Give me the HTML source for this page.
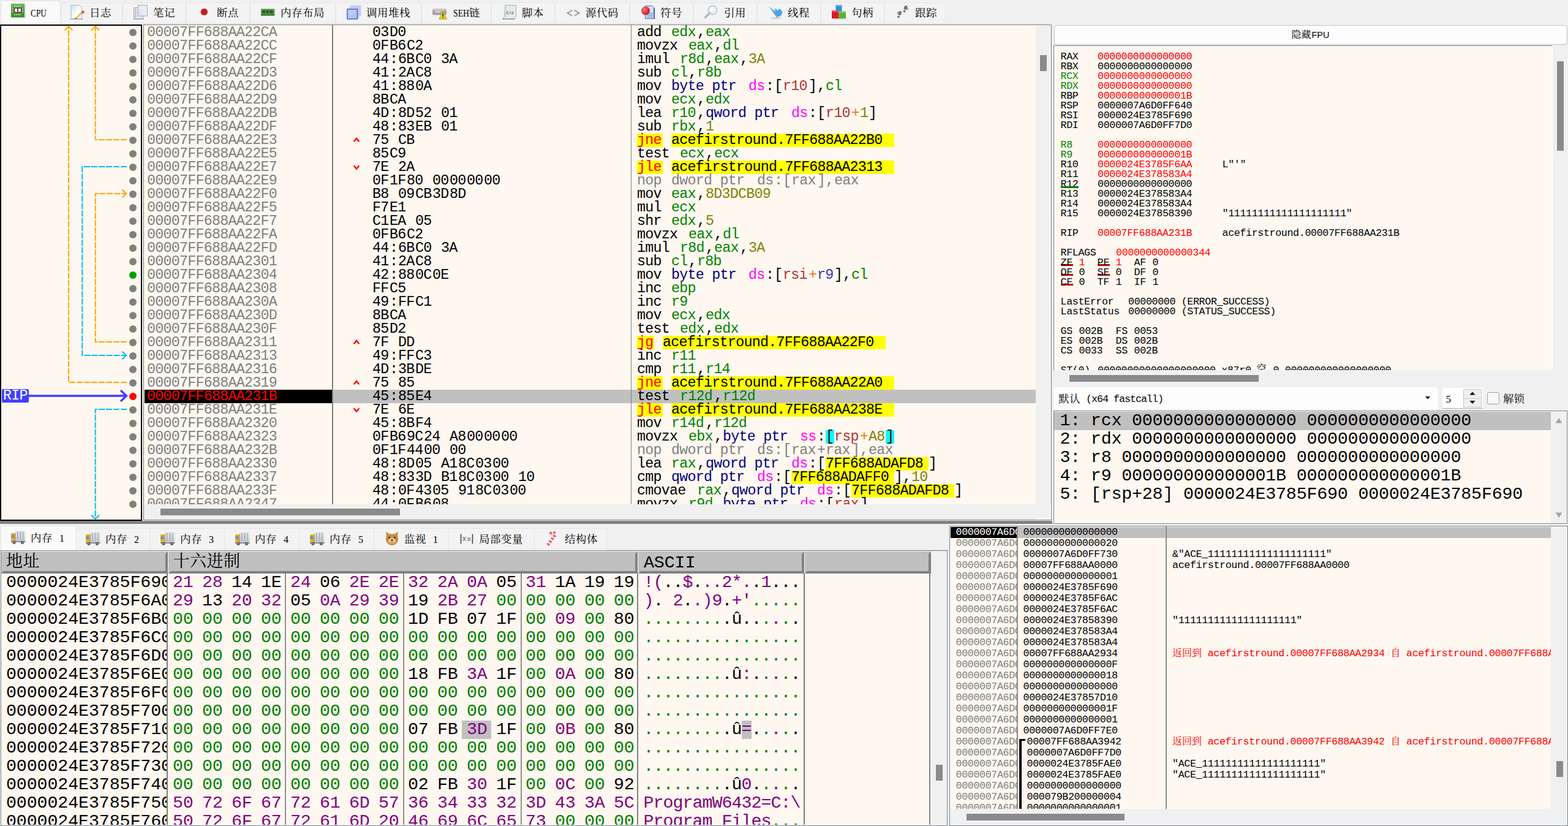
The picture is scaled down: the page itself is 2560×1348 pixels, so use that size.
<!DOCTYPE html>
<html><head><meta charset="utf-8"><title>x64dbg</title><style>
*{box-sizing:border-box}
html,body{margin:0;padding:0}
body{width:2560px;height:1348px;background:#f0f0f0;position:relative;overflow:hidden;font-family:"Liberation Sans",sans-serif}
div{position:absolute}
.pane{background:#fff8f0}
.m22{font:23.33px/22px "Liberation Mono", monospace;white-space:pre;letter-spacing:-0.75px;height:22px}
.m16{font:16.67px/16px "Liberation Mono", monospace;white-space:pre;letter-spacing:-0.36px}
.m27{font:26.67px/30px "Liberation Mono", monospace;white-space:pre;letter-spacing:0.07px;height:30px}
.m28{font:28.33px/30px "Liberation Mono", monospace;white-space:pre;letter-spacing:-0.13px;height:30px}
.t{display:inline-block;height:22px;vertical-align:top;overflow:visible}
.tab{background:#f3f3f3;border:1px solid #e6e6e6;border-bottom:none}
.hb{display:inline-block;width:48px;height:30px;vertical-align:top}
.ab{display:inline-block;width:16px;height:30px;vertical-align:top}
.ui{font:17.5px/18px "Liberation Serif",serif;white-space:pre}
.cj{font:17.5px/18px "Liberation Serif","Noto Serif CJK SC",serif;white-space:pre;letter-spacing:0.5px;color:#000}
.cj16{font:16px/18px "Liberation Serif","Noto Serif CJK SC",serif;white-space:pre;letter-spacing:0;color:#000}
.cj27{font:27px/30px "Liberation Serif","Noto Serif CJK SC",serif;white-space:pre;letter-spacing:0.5px;color:#000}
</style></head><body>
<div style="left:0;top:38px;width:1718px;height:1px;background:#dcdcdc"></div>
<div style="left:1px;top:1px;width:98px;height:39px;background:#fafafa;border:1px solid #e2e2e2;border-bottom:none"></div>
<svg style="position:absolute;left:18px;top:6px" width="24" height="24" viewBox="0 0 24 24"><defs><linearGradient id="gcpu" x1="0" y1="0" x2="0" y2="1"><stop offset="0" stop-color="#5cb85a"/><stop offset="1" stop-color="#2f8a33"/></linearGradient></defs><rect x="0.5" y="22" width="22" height="2" fill="#b8ccb8" opacity=".7"/><rect x="22" y="1" width="2" height="21.5" fill="#c8d8c8" opacity=".7"/><rect x="0" y="0" width="22" height="22" fill="url(#gcpu)"/><rect x="1.5" y="1.5" width="19" height="1.5" fill="#7cc878" opacity=".7"/><rect x="5" y="3.5" width="2" height="2.5" fill="#c9c860"/><rect x="5" y="16.5" width="2" height="2.5" fill="#c9c860"/><rect x="8" y="3.5" width="2" height="2.5" fill="#c9c860"/><rect x="8" y="16.5" width="2" height="2.5" fill="#c9c860"/><rect x="11" y="3.5" width="2" height="2.5" fill="#c9c860"/><rect x="11" y="16.5" width="2" height="2.5" fill="#c9c860"/><rect x="14" y="3.5" width="2" height="2.5" fill="#c9c860"/><rect x="14" y="16.5" width="2" height="2.5" fill="#c9c860"/><rect x="2" y="6.5" width="2.5" height="2" fill="#c9c860"/><rect x="17.5" y="6.5" width="2.5" height="2" fill="#c9c860"/><rect x="2" y="9.5" width="2.5" height="2" fill="#c9c860"/><rect x="17.5" y="9.5" width="2.5" height="2" fill="#c9c860"/><rect x="2" y="12.5" width="2.5" height="2" fill="#c9c860"/><rect x="17.5" y="12.5" width="2.5" height="2" fill="#c9c860"/><rect x="4" y="6" width="14" height="9.5" fill="#505050"/><rect x="6" y="8" width="4" height="5.5" fill="#f4f4f4"/><rect x="12" y="8" width="4" height="5.5" fill="#f4f4f4"/><rect x="6" y="13" width="10" height="1" fill="#888"/></svg>
<div class="ui" style="left:50.3px;top:11.8px;font-size:17.5px;transform:scaleX(0.764);transform-origin:0 0">CPU</div>
<div class="tab" style="left:99.5px;top:4px;width:100.5px;height:34px"></div>
<svg style="position:absolute;left:114px;top:8px" width="24" height="24" viewBox="0 0 24 24"><defs><linearGradient id="glog" x1="0" y1="0" x2="1" y2="1"><stop offset="0" stop-color="#d4e4e4"/><stop offset=".6" stop-color="#fdfefe"/></linearGradient></defs><path d="M2 0.5H15.5l4 4V23H2Z" fill="url(#glog)" stroke="#a4b8b8"/><rect x="0.5" y="22" width="21" height="1.6" fill="#9aa8a6" opacity=".8"/><path d="M8.5 22.5L18.5 11l2.5 2L11 23.5Z" fill="#d8c450"/><path d="M8 23l1-2 2 1.8Z" fill="#333"/><rect x="19.5" y="9.5" width="4" height="4.500" fill="#e85060"/></svg>
<div class="cj" style="left:145.9px;top:11.5px">日志</div>
<div class="tab" style="left:199.5px;top:4px;width:104.5px;height:34px"></div>
<svg style="position:absolute;left:218.0px;top:8px" width="24" height="24" viewBox="0 0 24 24"><rect x="0.5" y="4.5" width="15" height="18.5" fill="#dfe4f4" stroke="#9fb0b0"/><rect x="7.5" y="0.5" width="15" height="17.5" fill="#e8eef4" stroke="#9fb0b0"/><rect x="2.5" y="6" width="1.6" height="16" fill="#f0a8a8"/><rect x="0" y="22.5" width="16.5" height="1.5" fill="#a0aaa8"/><path d="M5 9h9M5 12h9M5 15h9M5 18h9" stroke="#c4cce8" stroke-width=".8"/></svg>
<div class="cj" style="left:249.9px;top:11.5px">笔记</div>
<div class="tab" style="left:303.5px;top:4px;width:104.5px;height:34px"></div>
<svg style="position:absolute;left:322.0px;top:8px" width="24" height="24" viewBox="0 0 24 24"><circle cx="11.4" cy="11.4" r="5.4" fill="#c61c1c"/><circle cx="11.4" cy="11.4" r="6.2" fill="#c61c1c" opacity=".25"/></svg>
<div class="cj" style="left:353.9px;top:11.5px">断点</div>
<div class="tab" style="left:407.5px;top:4px;width:140.5px;height:34px"></div>
<svg style="position:absolute;left:426.0px;top:8px" width="24" height="24" viewBox="0 0 24 24"><rect x="0" y="6.5" width="22" height="11" fill="#4a9a42"/><rect x="0" y="15.5" width="22" height="2" fill="#357a30"/><rect x="2.5" y="9" width="4.5" height="4.5" fill="#3a4a38"/><rect x="8.7" y="9" width="4.5" height="4.5" fill="#3a4a38"/><rect x="15" y="9" width="4.5" height="4.5" fill="#3a4a38"/><rect x="22" y="7" width="1.5" height="10" fill="#c0d4c0"/></svg>
<div class="cj" style="left:457.9px;top:11.5px">内存布局</div>
<div class="tab" style="left:547.5px;top:4px;width:140.5px;height:34px"></div>
<svg style="position:absolute;left:566.0px;top:8px" width="24" height="24" viewBox="0 0 24 24"><defs><linearGradient id="gcs" x1="0" y1="0" x2="1" y2="1"><stop offset="0" stop-color="#c4d4f0"/><stop offset="1" stop-color="#a8c0e8"/></linearGradient></defs><rect x="6" y="0.5" width="17.5" height="17.5" fill="#b4c8e8" opacity=".75"/><rect x="3.5" y="3.5" width="17.5" height="17.5" fill="#b8cce8" opacity=".8"/><rect x="1" y="7" width="16.5" height="16" fill="url(#gcs)" stroke="#6070e0" stroke-width="1.8"/></svg>
<div class="cj" style="left:597.9px;top:11.5px">调用堆栈</div>
<div class="tab" style="left:687.5px;top:4px;width:114.5px;height:34px"></div>
<svg style="position:absolute;left:706.0px;top:8px" width="24" height="24" viewBox="0 0 24 24"><rect x="0" y="6.5" width="23" height="10" rx="2.5" fill="#a0a0a0"/><rect x="1" y="7" width="21" height="3" rx="1.5" fill="#c4c4c4"/><rect x="4" y="10.5" width="10" height="2" rx="1" fill="#e4e4e4"/><path d="M17.2 10L23.6 23.4H10.8Z" fill="#e8d020" stroke="#b8a010" stroke-width=".8"/><rect x="16.5" y="14" width="1.6" height="5" fill="#333"/><rect x="16.5" y="20" width="1.6" height="1.6" fill="#333"/></svg>
<div class="ui" style="left:739.8px;top:12.3px;font-size:17.5px;transform:scaleX(0.786);transform-origin:0 0">SEH</div><div class="cj" style="left:765.8px;top:11.5px">链</div>
<div class="tab" style="left:801.5px;top:4px;width:104.5px;height:34px"></div>
<svg style="position:absolute;left:820.0px;top:8px" width="24" height="24" viewBox="0 0 24 24"><path d="M4.5 0.5H22.5V19.5l-2.5 3.5H0.5l3-3.5Z" fill="#e6ebe8" stroke="#a4b4b0"/><rect x="4.5" y="1" width="2" height="19" fill="#cfd8d4"/><path d="M0.5 23h19.5" stroke="#8c9a98" stroke-width="1.4"/><path d="M9.5 10.5L7 13l2.5 2.5M15.5 10.5L18 13l-2.5 2.5" fill="none" stroke="#8a9290" stroke-width="1.6"/><rect x="10.5" y="11" width="4" height="4" fill="#b8c0bc"/></svg>
<div class="cj" style="left:851.9px;top:11.5px">脚本</div>
<div class="tab" style="left:905.5px;top:4px;width:122.5px;height:34px"></div>
<svg style="position:absolute;left:924.0px;top:8px" width="24" height="24" viewBox="0 0 24 24"><path d="M10 8.8L2.8 13.3L10 17.8M14 8.8L21.2 13.3L14 17.8" fill="none" stroke="#8c8c8c" stroke-width="2.2" stroke-dasharray="2.4 0.7"/></svg>
<div class="cj" style="left:955.9px;top:11.5px">源代码</div>
<div class="tab" style="left:1027.5px;top:4px;width:104.5px;height:34px"></div>
<svg style="position:absolute;left:1046.0px;top:8px" width="24" height="24" viewBox="0 0 24 24"><path d="M7.5 1.5H19l3.5 3.5V22.5H7.5Z" fill="#d4e0f8" stroke="#5870c0"/><path d="M10 14h10M10 17h10M10 20h10" stroke="#8098e0" stroke-width="1.6"/><rect x="21" y="5" width="2" height="18" fill="#4860b0"/><defs><radialGradient id="gsym" cx=".35" cy=".35" r=".7"><stop offset="0" stop-color="#f08080"/><stop offset="1" stop-color="#c01818"/></radialGradient></defs><circle cx="8" cy="9.5" r="7" fill="url(#gsym)"/></svg>
<div class="cj" style="left:1077.9px;top:11.5px">符号</div>
<div class="tab" style="left:1131.5px;top:4px;width:104.5px;height:34px"></div>
<svg style="position:absolute;left:1150.0px;top:8px" width="24" height="24" viewBox="0 0 24 24"><circle cx="13.5" cy="8.5" r="7" fill="#eef2f8" stroke="#c4ccd4" stroke-width="2"/><circle cx="11.5" cy="6.5" r="2.5" fill="#fff"/><path d="M8.5 13.5L1.5 20.5" stroke="#b4b8bc" stroke-width="3.6" stroke-linecap="round"/></svg>
<div class="cj" style="left:1181.9px;top:11.5px">引用</div>
<div class="tab" style="left:1235.5px;top:4px;width:104.5px;height:34px"></div>
<svg style="position:absolute;left:1254.0px;top:8px" width="24" height="24" viewBox="0 0 24 24"><ellipse cx="13" cy="21.5" rx="9" ry="1.6" fill="#c8c8c8" opacity=".7"/><path d="M0.5 2.5C4 6 6 9 8 12c2 3 3 5 6 6.5l-1.5 2.5 5-2c4-1 5.5-4 5.8-8l-3-3.5c-2-2-4 0-4.5 2l-4-4-1 4C8 7 4 5 0.5 2.5Z" fill="#4ea4e8"/><path d="M3 4.5c4 3 7 6 10 6" stroke="#8cc8f4" stroke-width="1.4" fill="none"/></svg>
<div class="cj" style="left:1285.9px;top:11.5px">线程</div>
<div class="tab" style="left:1339.5px;top:4px;width:104.5px;height:34px"></div>
<svg style="position:absolute;left:1358.0px;top:8px" width="24" height="24" viewBox="0 0 24 24"><rect x="6.5" y="0" width="10" height="11" fill="#2a92d8"/><rect x="6.5" y="0" width="10" height="2.5" fill="#58b4f0"/><rect x="0" y="9" width="11.5" height="13" fill="#d81c24"/><rect x="0" y="9" width="11.5" height="2.5" fill="#f05058"/><rect x="11.5" y="10.5" width="11.5" height="11.5" fill="#58b038"/><rect x="11.5" y="10.5" width="11.5" height="2.5" fill="#88d068"/><rect x="1" y="22" width="22" height="1.6" fill="#b8b8b8" opacity=".7"/></svg>
<div class="cj" style="left:1389.9px;top:11.5px">句柄</div>
<div class="tab" style="left:1443.5px;top:4px;width:100.5px;height:34px"></div>
<svg style="position:absolute;left:1462.0px;top:8px" width="24" height="24" viewBox="0 0 24 24"><g fill="#707070"><ellipse cx="16.5" cy="4.5" rx="2.6" ry="3.6" transform="rotate(20 16.5 4.5)"/><ellipse cx="14.5" cy="10.5" rx="2" ry="1.8"/><ellipse cx="7" cy="13.5" rx="2.6" ry="3.6" transform="rotate(20 7 13.5)"/><ellipse cx="5" cy="19.5" rx="2" ry="1.8"/></g><g fill="#a8a8a8"><ellipse cx="19.5" cy="6.5" rx="1.6" ry="2.4"/><ellipse cx="4" cy="13" rx="1.4" ry="2"/></g></svg>
<div class="cj" style="left:1493.9px;top:11.5px">跟踪</div>
<div style="left:234px;top:40px;width:1483px;height:809px;background:#f0f0f0;border:1px solid #7a8290"></div>
<div style="left:235px;top:41px;width:1456px;height:782px;background:#fff8f0;overflow:hidden">
<div style="left:1px;top:595px;width:306px;height:22px;background:#000"></div>
<div style="left:307px;top:595px;width:1160px;height:22px;background:#c0c0c0"></div>
<div style="left:307px;top:0;width:1.5px;height:790px;background:#808080"></div>
<div style="left:794.5px;top:0;width:1.5px;height:790px;background:#808080"></div>
<div class="m22" style="left:5px;top:1px;color:#808080">00007FF688AA22CA</div>
<div class="m22" style="left:373px;top:1px"><span class="t" style="width:28px">03</span><span class="t" style="width:28px">D0</span></div>
<div class="m22" style="left:805px;top:1px"><span class="t" style="width:42px;">add</span><span class="t" style="width:14px;"> </span><span class="t" style="width:42px;color:#008300;">edx</span><span class="t" style="width:14px;">,</span><span class="t" style="width:42px;color:#008300;">eax</span></div>
<div class="m22" style="left:5px;top:23px;color:#808080">00007FF688AA22CC</div>
<div class="m22" style="left:373px;top:23px"><span class="t" style="width:28px">0F</span><span class="t" style="width:28px">B6</span><span class="t" style="width:28px">C2</span></div>
<div class="m22" style="left:805px;top:23px"><span class="t" style="width:70px;">movzx</span><span class="t" style="width:14px;"> </span><span class="t" style="width:42px;color:#008300;">eax</span><span class="t" style="width:14px;">,</span><span class="t" style="width:28px;color:#008300;">dl</span></div>
<div class="m22" style="left:5px;top:45px;color:#808080">00007FF688AA22CF</div>
<div class="m22" style="left:373px;top:45px"><span class="t" style="width:28px">44</span><span class="t" style="width:14px">:</span><span class="t" style="width:28px">6B</span><span class="t" style="width:28px">C0</span><span class="t" style="width:14px"> </span><span class="t" style="width:28px">3A</span></div>
<div class="m22" style="left:805px;top:45px"><span class="t" style="width:56px;">imul</span><span class="t" style="width:14px;"> </span><span class="t" style="width:42px;color:#008300;">r8d</span><span class="t" style="width:14px;">,</span><span class="t" style="width:42px;color:#008300;">eax</span><span class="t" style="width:14px;">,</span><span class="t" style="width:28px;color:#828200;">3A</span></div>
<div class="m22" style="left:5px;top:67px;color:#808080">00007FF688AA22D3</div>
<div class="m22" style="left:373px;top:67px"><span class="t" style="width:28px">41</span><span class="t" style="width:14px">:</span><span class="t" style="width:28px">2A</span><span class="t" style="width:28px">C8</span></div>
<div class="m22" style="left:805px;top:67px"><span class="t" style="width:42px;">sub</span><span class="t" style="width:14px;"> </span><span class="t" style="width:28px;color:#008300;">cl</span><span class="t" style="width:14px;">,</span><span class="t" style="width:42px;color:#008300;">r8b</span></div>
<div class="m22" style="left:5px;top:89px;color:#808080">00007FF688AA22D6</div>
<div class="m22" style="left:373px;top:89px"><span class="t" style="width:28px">41</span><span class="t" style="width:14px">:</span><span class="t" style="width:28px">88</span><span class="t" style="width:28px">0A</span></div>
<div class="m22" style="left:805px;top:89px"><span class="t" style="width:42px;">mov</span><span class="t" style="width:14px;"> </span><span class="t" style="width:112px;color:#000080;">byte ptr</span><span class="t" style="width:14px;"> </span><span class="t" style="width:28px;color:#ff00ff;">ds</span><span class="t" style="width:14px;">:</span><span class="t" style="width:14px;">[</span><span class="t" style="width:42px;color:#b03434;">r10</span><span class="t" style="width:14px;">]</span><span class="t" style="width:14px;">,</span><span class="t" style="width:28px;color:#008300;">cl</span></div>
<div class="m22" style="left:5px;top:111px;color:#808080">00007FF688AA22D9</div>
<div class="m22" style="left:373px;top:111px"><span class="t" style="width:28px">8B</span><span class="t" style="width:28px">CA</span></div>
<div class="m22" style="left:805px;top:111px"><span class="t" style="width:42px;">mov</span><span class="t" style="width:14px;"> </span><span class="t" style="width:42px;color:#008300;">ecx</span><span class="t" style="width:14px;">,</span><span class="t" style="width:42px;color:#008300;">edx</span></div>
<div class="m22" style="left:5px;top:133px;color:#808080">00007FF688AA22DB</div>
<div class="m22" style="left:373px;top:133px"><span class="t" style="width:28px">4D</span><span class="t" style="width:14px">:</span><span class="t" style="width:28px">8D</span><span class="t" style="width:28px">52</span><span class="t" style="width:14px"> </span><span class="t" style="width:28px">01</span></div>
<div class="m22" style="left:805px;top:133px"><span class="t" style="width:42px;">lea</span><span class="t" style="width:14px;"> </span><span class="t" style="width:42px;color:#008300;">r10</span><span class="t" style="width:14px;">,</span><span class="t" style="width:126px;color:#000080;">qword ptr</span><span class="t" style="width:14px;"> </span><span class="t" style="width:28px;color:#ff00ff;">ds</span><span class="t" style="width:14px;">:</span><span class="t" style="width:14px;">[</span><span class="t" style="width:42px;color:#b03434;">r10</span><span class="t" style="width:14px;color:#f27711;">+</span><span class="t" style="width:14px;color:#828200;">1</span><span class="t" style="width:14px;">]</span></div>
<div class="m22" style="left:5px;top:155px;color:#808080">00007FF688AA22DF</div>
<div class="m22" style="left:373px;top:155px"><span class="t" style="width:28px">48</span><span class="t" style="width:14px">:</span><span class="t" style="width:28px">83</span><span class="t" style="width:28px">EB</span><span class="t" style="width:14px"> </span><span class="t" style="width:28px">01</span></div>
<div class="m22" style="left:805px;top:155px"><span class="t" style="width:42px;">sub</span><span class="t" style="width:14px;"> </span><span class="t" style="width:42px;color:#008300;">rbx</span><span class="t" style="width:14px;">,</span><span class="t" style="width:14px;color:#828200;">1</span></div>
<div class="m22" style="left:5px;top:177px;color:#808080">00007FF688AA22E3</div>
<svg style="position:absolute;left:341px;top:182px" width="12" height="12"><path d="M1.7 8.3L6 3L10.3 8.3" fill="none" stroke="#f00" stroke-width="2.4"/></svg>
<div class="m22" style="left:373px;top:177px"><span class="t" style="width:28px">75</span><span class="t" style="width:14px"> </span><span class="t" style="width:28px">CB</span></div>
<div class="m22" style="left:805px;top:177px"><span class="t" style="width:42px;color:#ff0000;background:#ffff00;">jne</span><span class="t" style="width:14px;"> </span><span class="t" style="width:364px;background:#ffff00;">acefirstround.7FF688AA22B0</span></div>
<div class="m22" style="left:5px;top:199px;color:#808080">00007FF688AA22E5</div>
<div class="m22" style="left:373px;top:199px"><span class="t" style="width:28px">85</span><span class="t" style="width:28px">C9</span></div>
<div class="m22" style="left:805px;top:199px"><span class="t" style="width:56px;">test</span><span class="t" style="width:14px;"> </span><span class="t" style="width:42px;color:#008300;">ecx</span><span class="t" style="width:14px;">,</span><span class="t" style="width:42px;color:#008300;">ecx</span></div>
<div class="m22" style="left:5px;top:221px;color:#808080">00007FF688AA22E7</div>
<svg style="position:absolute;left:341px;top:226px" width="12" height="12"><path d="M1.7 3.2L6 8.5L10.3 3.2" fill="none" stroke="#f00" stroke-width="2.4"/></svg>
<div class="m22" style="left:373px;top:221px"><span class="t" style="width:28px">7E</span><span class="t" style="width:14px"> </span><span class="t" style="width:28px">2A</span></div>
<div class="m22" style="left:805px;top:221px"><span class="t" style="width:42px;color:#ff0000;background:#ffff00;">jle</span><span class="t" style="width:14px;"> </span><span class="t" style="width:364px;background:#ffff00;">acefirstround.7FF688AA2313</span></div>
<div class="m22" style="left:5px;top:243px;color:#808080">00007FF688AA22E9</div>
<div class="m22" style="left:373px;top:243px"><span class="t" style="width:28px">0F</span><span class="t" style="width:28px">1F</span><span class="t" style="width:28px">80</span><span class="t" style="width:14px"> </span><span class="t" style="width:28px">00</span><span class="t" style="width:28px">00</span><span class="t" style="width:28px">00</span><span class="t" style="width:28px">00</span></div>
<div class="m22" style="left:805px;top:243px"><span class="t" style="width:42px;color:#808080;">nop</span><span class="t" style="width:14px;"> </span><span class="t" style="width:126px;color:#808080;">dword ptr</span><span class="t" style="width:14px;"> </span><span class="t" style="width:28px;color:#808080;">ds</span><span class="t" style="width:14px;color:#808080;">:</span><span class="t" style="width:14px;color:#808080;">[</span><span class="t" style="width:42px;color:#808080;">rax</span><span class="t" style="width:14px;color:#808080;">]</span><span class="t" style="width:14px;color:#808080;">,</span><span class="t" style="width:42px;color:#808080;">eax</span></div>
<div class="m22" style="left:5px;top:265px;color:#808080">00007FF688AA22F0</div>
<div class="m22" style="left:373px;top:265px"><span class="t" style="width:28px">B8</span><span class="t" style="width:14px"> </span><span class="t" style="width:28px">09</span><span class="t" style="width:28px">CB</span><span class="t" style="width:28px">3D</span><span class="t" style="width:28px">8D</span></div>
<div class="m22" style="left:805px;top:265px"><span class="t" style="width:42px;">mov</span><span class="t" style="width:14px;"> </span><span class="t" style="width:42px;color:#008300;">eax</span><span class="t" style="width:14px;">,</span><span class="t" style="width:112px;color:#828200;">8D3DCB09</span></div>
<div class="m22" style="left:5px;top:287px;color:#808080">00007FF688AA22F5</div>
<div class="m22" style="left:373px;top:287px"><span class="t" style="width:28px">F7</span><span class="t" style="width:28px">E1</span></div>
<div class="m22" style="left:805px;top:287px"><span class="t" style="width:42px;">mul</span><span class="t" style="width:14px;"> </span><span class="t" style="width:42px;color:#008300;">ecx</span></div>
<div class="m22" style="left:5px;top:309px;color:#808080">00007FF688AA22F7</div>
<div class="m22" style="left:373px;top:309px"><span class="t" style="width:28px">C1</span><span class="t" style="width:28px">EA</span><span class="t" style="width:14px"> </span><span class="t" style="width:28px">05</span></div>
<div class="m22" style="left:805px;top:309px"><span class="t" style="width:42px;">shr</span><span class="t" style="width:14px;"> </span><span class="t" style="width:42px;color:#008300;">edx</span><span class="t" style="width:14px;">,</span><span class="t" style="width:14px;color:#828200;">5</span></div>
<div class="m22" style="left:5px;top:331px;color:#808080">00007FF688AA22FA</div>
<div class="m22" style="left:373px;top:331px"><span class="t" style="width:28px">0F</span><span class="t" style="width:28px">B6</span><span class="t" style="width:28px">C2</span></div>
<div class="m22" style="left:805px;top:331px"><span class="t" style="width:70px;">movzx</span><span class="t" style="width:14px;"> </span><span class="t" style="width:42px;color:#008300;">eax</span><span class="t" style="width:14px;">,</span><span class="t" style="width:28px;color:#008300;">dl</span></div>
<div class="m22" style="left:5px;top:353px;color:#808080">00007FF688AA22FD</div>
<div class="m22" style="left:373px;top:353px"><span class="t" style="width:28px">44</span><span class="t" style="width:14px">:</span><span class="t" style="width:28px">6B</span><span class="t" style="width:28px">C0</span><span class="t" style="width:14px"> </span><span class="t" style="width:28px">3A</span></div>
<div class="m22" style="left:805px;top:353px"><span class="t" style="width:56px;">imul</span><span class="t" style="width:14px;"> </span><span class="t" style="width:42px;color:#008300;">r8d</span><span class="t" style="width:14px;">,</span><span class="t" style="width:42px;color:#008300;">eax</span><span class="t" style="width:14px;">,</span><span class="t" style="width:28px;color:#828200;">3A</span></div>
<div class="m22" style="left:5px;top:375px;color:#808080">00007FF688AA2301</div>
<div class="m22" style="left:373px;top:375px"><span class="t" style="width:28px">41</span><span class="t" style="width:14px">:</span><span class="t" style="width:28px">2A</span><span class="t" style="width:28px">C8</span></div>
<div class="m22" style="left:805px;top:375px"><span class="t" style="width:42px;">sub</span><span class="t" style="width:14px;"> </span><span class="t" style="width:28px;color:#008300;">cl</span><span class="t" style="width:14px;">,</span><span class="t" style="width:42px;color:#008300;">r8b</span></div>
<div class="m22" style="left:5px;top:397px;color:#808080">00007FF688AA2304</div>
<div class="m22" style="left:373px;top:397px"><span class="t" style="width:28px">42</span><span class="t" style="width:14px">:</span><span class="t" style="width:28px">88</span><span class="t" style="width:28px">0C</span><span class="t" style="width:28px">0E</span></div>
<div class="m22" style="left:805px;top:397px"><span class="t" style="width:42px;">mov</span><span class="t" style="width:14px;"> </span><span class="t" style="width:112px;color:#000080;">byte ptr</span><span class="t" style="width:14px;"> </span><span class="t" style="width:28px;color:#ff00ff;">ds</span><span class="t" style="width:14px;">:</span><span class="t" style="width:14px;">[</span><span class="t" style="width:42px;color:#b03434;">rsi</span><span class="t" style="width:14px;color:#f27711;">+</span><span class="t" style="width:28px;color:#3838bc;">r9</span><span class="t" style="width:14px;">]</span><span class="t" style="width:14px;">,</span><span class="t" style="width:28px;color:#008300;">cl</span></div>
<div class="m22" style="left:5px;top:419px;color:#808080">00007FF688AA2308</div>
<div class="m22" style="left:373px;top:419px"><span class="t" style="width:28px">FF</span><span class="t" style="width:28px">C5</span></div>
<div class="m22" style="left:805px;top:419px"><span class="t" style="width:42px;">inc</span><span class="t" style="width:14px;"> </span><span class="t" style="width:42px;color:#008300;">ebp</span></div>
<div class="m22" style="left:5px;top:441px;color:#808080">00007FF688AA230A</div>
<div class="m22" style="left:373px;top:441px"><span class="t" style="width:28px">49</span><span class="t" style="width:14px">:</span><span class="t" style="width:28px">FF</span><span class="t" style="width:28px">C1</span></div>
<div class="m22" style="left:805px;top:441px"><span class="t" style="width:42px;">inc</span><span class="t" style="width:14px;"> </span><span class="t" style="width:28px;color:#008300;">r9</span></div>
<div class="m22" style="left:5px;top:463px;color:#808080">00007FF688AA230D</div>
<div class="m22" style="left:373px;top:463px"><span class="t" style="width:28px">8B</span><span class="t" style="width:28px">CA</span></div>
<div class="m22" style="left:805px;top:463px"><span class="t" style="width:42px;">mov</span><span class="t" style="width:14px;"> </span><span class="t" style="width:42px;color:#008300;">ecx</span><span class="t" style="width:14px;">,</span><span class="t" style="width:42px;color:#008300;">edx</span></div>
<div class="m22" style="left:5px;top:485px;color:#808080">00007FF688AA230F</div>
<div class="m22" style="left:373px;top:485px"><span class="t" style="width:28px">85</span><span class="t" style="width:28px">D2</span></div>
<div class="m22" style="left:805px;top:485px"><span class="t" style="width:56px;">test</span><span class="t" style="width:14px;"> </span><span class="t" style="width:42px;color:#008300;">edx</span><span class="t" style="width:14px;">,</span><span class="t" style="width:42px;color:#008300;">edx</span></div>
<div class="m22" style="left:5px;top:507px;color:#808080">00007FF688AA2311</div>
<svg style="position:absolute;left:341px;top:512px" width="12" height="12"><path d="M1.7 8.3L6 3L10.3 8.3" fill="none" stroke="#f00" stroke-width="2.4"/></svg>
<div class="m22" style="left:373px;top:507px"><span class="t" style="width:28px">7F</span><span class="t" style="width:14px"> </span><span class="t" style="width:28px">DD</span></div>
<div class="m22" style="left:805px;top:507px"><span class="t" style="width:28px;color:#ff0000;background:#ffff00;">jg</span><span class="t" style="width:14px;"> </span><span class="t" style="width:364px;background:#ffff00;">acefirstround.7FF688AA22F0</span></div>
<div class="m22" style="left:5px;top:529px;color:#808080">00007FF688AA2313</div>
<div class="m22" style="left:373px;top:529px"><span class="t" style="width:28px">49</span><span class="t" style="width:14px">:</span><span class="t" style="width:28px">FF</span><span class="t" style="width:28px">C3</span></div>
<div class="m22" style="left:805px;top:529px"><span class="t" style="width:42px;">inc</span><span class="t" style="width:14px;"> </span><span class="t" style="width:42px;color:#008300;">r11</span></div>
<div class="m22" style="left:5px;top:551px;color:#808080">00007FF688AA2316</div>
<div class="m22" style="left:373px;top:551px"><span class="t" style="width:28px">4D</span><span class="t" style="width:14px">:</span><span class="t" style="width:28px">3B</span><span class="t" style="width:28px">DE</span></div>
<div class="m22" style="left:805px;top:551px"><span class="t" style="width:42px;">cmp</span><span class="t" style="width:14px;"> </span><span class="t" style="width:42px;color:#008300;">r11</span><span class="t" style="width:14px;">,</span><span class="t" style="width:42px;color:#008300;">r14</span></div>
<div class="m22" style="left:5px;top:573px;color:#808080">00007FF688AA2319</div>
<svg style="position:absolute;left:341px;top:578px" width="12" height="12"><path d="M1.7 8.3L6 3L10.3 8.3" fill="none" stroke="#f00" stroke-width="2.4"/></svg>
<div class="m22" style="left:373px;top:573px"><span class="t" style="width:28px">75</span><span class="t" style="width:14px"> </span><span class="t" style="width:28px">85</span></div>
<div class="m22" style="left:805px;top:573px"><span class="t" style="width:42px;color:#ff0000;background:#ffff00;">jne</span><span class="t" style="width:14px;"> </span><span class="t" style="width:364px;background:#ffff00;">acefirstround.7FF688AA22A0</span></div>
<div class="m22" style="left:5px;top:595px;color:#ff0000">00007FF688AA231B</div>
<div class="m22" style="left:373px;top:595px"><span class="t" style="width:28px">45</span><span class="t" style="width:14px">:</span><span class="t" style="width:28px">85</span><span class="t" style="width:28px">E4</span></div>
<div class="m22" style="left:805px;top:595px"><span class="t" style="width:56px;">test</span><span class="t" style="width:14px;"> </span><span class="t" style="width:56px;color:#008300;">r12d</span><span class="t" style="width:14px;">,</span><span class="t" style="width:56px;color:#008300;">r12d</span></div>
<div class="m22" style="left:5px;top:617px;color:#808080">00007FF688AA231E</div>
<svg style="position:absolute;left:341px;top:622px" width="12" height="12"><path d="M1.7 3.2L6 8.5L10.3 3.2" fill="none" stroke="#f00" stroke-width="2.4"/></svg>
<div class="m22" style="left:373px;top:617px"><span class="t" style="width:28px">7E</span><span class="t" style="width:14px"> </span><span class="t" style="width:28px">6E</span></div>
<div class="m22" style="left:805px;top:617px"><span class="t" style="width:42px;color:#ff0000;background:#ffff00;">jle</span><span class="t" style="width:14px;"> </span><span class="t" style="width:364px;background:#ffff00;">acefirstround.7FF688AA238E</span></div>
<div class="m22" style="left:5px;top:639px;color:#808080">00007FF688AA2320</div>
<div class="m22" style="left:373px;top:639px"><span class="t" style="width:28px">45</span><span class="t" style="width:14px">:</span><span class="t" style="width:28px">8B</span><span class="t" style="width:28px">F4</span></div>
<div class="m22" style="left:805px;top:639px"><span class="t" style="width:42px;">mov</span><span class="t" style="width:14px;"> </span><span class="t" style="width:56px;color:#008300;">r14d</span><span class="t" style="width:14px;">,</span><span class="t" style="width:56px;color:#008300;">r12d</span></div>
<div class="m22" style="left:5px;top:661px;color:#808080">00007FF688AA2323</div>
<div class="m22" style="left:373px;top:661px"><span class="t" style="width:28px">0F</span><span class="t" style="width:28px">B6</span><span class="t" style="width:28px">9C</span><span class="t" style="width:28px">24</span><span class="t" style="width:14px"> </span><span class="t" style="width:28px">A8</span><span class="t" style="width:28px">00</span><span class="t" style="width:28px">00</span><span class="t" style="width:28px">00</span></div>
<div class="m22" style="left:805px;top:661px"><span class="t" style="width:70px;">movzx</span><span class="t" style="width:14px;"> </span><span class="t" style="width:42px;color:#008300;">ebx</span><span class="t" style="width:14px;">,</span><span class="t" style="width:112px;color:#000080;">byte ptr</span><span class="t" style="width:14px;"> </span><span class="t" style="width:28px;color:#ff00ff;">ss</span><span class="t" style="width:14px;">:</span><span class="t" style="width:14px;background:#00ffff;">[</span><span class="t" style="width:42px;color:#b03434;">rsp</span><span class="t" style="width:14px;color:#f27711;">+</span><span class="t" style="width:28px;color:#828200;">A8</span><span class="t" style="width:14px;background:#00ffff;">]</span></div>
<div class="m22" style="left:5px;top:683px;color:#808080">00007FF688AA232B</div>
<div class="m22" style="left:373px;top:683px"><span class="t" style="width:28px">0F</span><span class="t" style="width:28px">1F</span><span class="t" style="width:28px">44</span><span class="t" style="width:28px">00</span><span class="t" style="width:14px"> </span><span class="t" style="width:28px">00</span></div>
<div class="m22" style="left:805px;top:683px"><span class="t" style="width:42px;color:#808080;">nop</span><span class="t" style="width:14px;"> </span><span class="t" style="width:126px;color:#808080;">dword ptr</span><span class="t" style="width:14px;"> </span><span class="t" style="width:28px;color:#808080;">ds</span><span class="t" style="width:14px;color:#808080;">:</span><span class="t" style="width:14px;color:#808080;">[</span><span class="t" style="width:42px;color:#808080;">rax</span><span class="t" style="width:14px;color:#808080;">+</span><span class="t" style="width:42px;color:#808080;">rax</span><span class="t" style="width:14px;color:#808080;">]</span><span class="t" style="width:14px;color:#808080;">,</span><span class="t" style="width:42px;color:#808080;">eax</span></div>
<div class="m22" style="left:5px;top:705px;color:#808080">00007FF688AA2330</div>
<div class="m22" style="left:373px;top:705px"><span class="t" style="width:28px">48</span><span class="t" style="width:14px">:</span><span class="t" style="width:28px">8D</span><span class="t" style="width:28px">05</span><span class="t" style="width:14px"> </span><span class="t" style="width:28px">A1</span><span class="t" style="width:28px">8C</span><span class="t" style="width:28px">03</span><span class="t" style="width:28px">00</span></div>
<div class="m22" style="left:805px;top:705px"><span class="t" style="width:42px;">lea</span><span class="t" style="width:14px;"> </span><span class="t" style="width:42px;color:#008300;">rax</span><span class="t" style="width:14px;">,</span><span class="t" style="width:126px;color:#000080;">qword ptr</span><span class="t" style="width:14px;"> </span><span class="t" style="width:28px;color:#ff00ff;">ds</span><span class="t" style="width:14px;">:</span><span class="t" style="width:14px;">[</span><span class="t" style="width:168px;background:#ffff00;">7FF688ADAFD8</span><span class="t" style="width:14px;">]</span></div>
<div class="m22" style="left:5px;top:727px;color:#808080">00007FF688AA2337</div>
<div class="m22" style="left:373px;top:727px"><span class="t" style="width:28px">48</span><span class="t" style="width:14px">:</span><span class="t" style="width:28px">83</span><span class="t" style="width:28px">3D</span><span class="t" style="width:14px"> </span><span class="t" style="width:28px">B1</span><span class="t" style="width:28px">8C</span><span class="t" style="width:28px">03</span><span class="t" style="width:28px">00</span><span class="t" style="width:14px"> </span><span class="t" style="width:28px">10</span></div>
<div class="m22" style="left:805px;top:727px"><span class="t" style="width:42px;">cmp</span><span class="t" style="width:14px;"> </span><span class="t" style="width:126px;color:#000080;">qword ptr</span><span class="t" style="width:14px;"> </span><span class="t" style="width:28px;color:#ff00ff;">ds</span><span class="t" style="width:14px;">:</span><span class="t" style="width:14px;">[</span><span class="t" style="width:168px;background:#ffff00;">7FF688ADAFF0</span><span class="t" style="width:14px;">]</span><span class="t" style="width:14px;">,</span><span class="t" style="width:28px;color:#828200;">10</span></div>
<div class="m22" style="left:5px;top:749px;color:#808080">00007FF688AA233F</div>
<div class="m22" style="left:373px;top:749px"><span class="t" style="width:28px">48</span><span class="t" style="width:14px">:</span><span class="t" style="width:28px">0F</span><span class="t" style="width:28px">43</span><span class="t" style="width:28px">05</span><span class="t" style="width:14px"> </span><span class="t" style="width:28px">91</span><span class="t" style="width:28px">8C</span><span class="t" style="width:28px">03</span><span class="t" style="width:28px">00</span></div>
<div class="m22" style="left:805px;top:749px"><span class="t" style="width:84px;">cmovae</span><span class="t" style="width:14px;"> </span><span class="t" style="width:42px;color:#008300;">rax</span><span class="t" style="width:14px;">,</span><span class="t" style="width:126px;color:#000080;">qword ptr</span><span class="t" style="width:14px;"> </span><span class="t" style="width:28px;color:#ff00ff;">ds</span><span class="t" style="width:14px;">:</span><span class="t" style="width:14px;">[</span><span class="t" style="width:168px;background:#ffff00;">7FF688ADAFD8</span><span class="t" style="width:14px;">]</span></div>
<div class="m22" style="left:5px;top:771px;color:#808080">00007FF688AA2347</div>
<div class="m22" style="left:373px;top:771px"><span class="t" style="width:28px">44</span><span class="t" style="width:14px">:</span><span class="t" style="width:28px">0F</span><span class="t" style="width:28px">B6</span><span class="t" style="width:28px">08</span></div>
<div class="m22" style="left:805px;top:771px"><span class="t" style="width:70px;">movzx</span><span class="t" style="width:14px;"> </span><span class="t" style="width:42px;color:#008300;">r9d</span><span class="t" style="width:14px;">,</span><span class="t" style="width:112px;color:#000080;">byte ptr</span><span class="t" style="width:14px;"> </span><span class="t" style="width:28px;color:#ff00ff;">ds</span><span class="t" style="width:14px;">:</span><span class="t" style="width:14px;">[</span><span class="t" style="width:42px;color:#b03434;">rax</span><span class="t" style="width:14px;">]</span></div>
</div>
<div style="left:1691px;top:41px;width:25px;height:807px;background:#f0f0f0"></div>
<div style="left:1690px;top:846px;width:25.5px;height:1.5px;background:#fff"></div>
<div style="left:1713.5px;top:822px;width:2px;height:25.5px;background:#fff"></div>
<div style="left:1698px;top:90px;width:11px;height:26px;background:#8a8a8a"></div>
<div style="left:235px;top:823px;width:1456px;height:25px;background:#f0f0f0"></div>
<div style="left:262px;top:830px;width:391px;height:11px;background:#8a8a8a"></div>
<div style="left:0;top:40px;width:232px;height:810px;background:#fff8f0;border:2px solid #000"></div>
<div style="left:0;top:850px;width:1718px;height:4.5px;background:#808080"></div>
<svg style="position:absolute;left:2px;top:42px" width="228" height="806" viewBox="2 42 228 806"><path d="M207 624L112 624L112 43" fill="none" stroke="#ffa500" stroke-width="2" stroke-dasharray="10 2"/><path d="M105.5 49.5L112 43L118.5 49.5" fill="none" stroke="#ffa500" stroke-width="2"/><path d="M207 228L155.7 228L155.7 43" fill="none" stroke="#ffa500" stroke-width="2" stroke-dasharray="10 2"/><path d="M149.2 49.5L155.7 43L162.2 49.5" fill="none" stroke="#ffa500" stroke-width="2"/><path d="M207 272L134.3 272L134.3 580L205 580" fill="none" stroke="#00bbff" stroke-width="2" stroke-dasharray="10 2"/><path d="M199.5 573.5L206 580L199.5 586.5" fill="none" stroke="#00bbff" stroke-width="2"/><path d="M207 558L155.7 558L155.7 316L205 316" fill="none" stroke="#ffa500" stroke-width="2" stroke-dasharray="10 2"/><path d="M199.5 309.5L206 316L199.5 322.5" fill="none" stroke="#ffa500" stroke-width="2"/><path d="M207 668L155.7 668L155.7 846" fill="none" stroke="#00bbff" stroke-width="2" stroke-dasharray="10 2"/><path d="M149.2 840.5L155.7 847L162.2 840.5" fill="none" stroke="#00bbff" stroke-width="2"/><path d="M46 646H205" stroke="#4040ff" stroke-width="3.7" fill="none"/><path d="M197 637L206.5 646L197 655" stroke="#4040ff" stroke-width="3.4" fill="none"/><circle cx="217" cy="53" r="6" fill="#808080"/><circle cx="217" cy="75" r="6" fill="#808080"/><circle cx="217" cy="97" r="6" fill="#808080"/><circle cx="217" cy="119" r="6" fill="#808080"/><circle cx="217" cy="141" r="6" fill="#808080"/><circle cx="217" cy="163" r="6" fill="#808080"/><circle cx="217" cy="185" r="6" fill="#808080"/><circle cx="217" cy="207" r="6" fill="#808080"/><circle cx="217" cy="229" r="6" fill="#808080"/><circle cx="217" cy="251" r="6" fill="#808080"/><circle cx="217" cy="273" r="6" fill="#808080"/><circle cx="217" cy="295" r="6" fill="#808080"/><circle cx="217" cy="317" r="6" fill="#808080"/><circle cx="217" cy="339" r="6" fill="#808080"/><circle cx="217" cy="361" r="6" fill="#808080"/><circle cx="217" cy="383" r="6" fill="#808080"/><circle cx="217" cy="405" r="6" fill="#808080"/><circle cx="217" cy="427" r="6" fill="#808080"/><circle cx="217" cy="449" r="6" fill="#00a000"/><circle cx="217" cy="471" r="6" fill="#808080"/><circle cx="217" cy="493" r="6" fill="#808080"/><circle cx="217" cy="515" r="6" fill="#808080"/><circle cx="217" cy="537" r="6" fill="#808080"/><circle cx="217" cy="559" r="6" fill="#808080"/><circle cx="217" cy="581" r="6" fill="#808080"/><circle cx="217" cy="603" r="6" fill="#808080"/><circle cx="217" cy="625" r="6" fill="#808080"/><circle cx="217" cy="647" r="6" fill="#ff0000"/><circle cx="217" cy="669" r="6" fill="#808080"/><circle cx="217" cy="691" r="6" fill="#808080"/><circle cx="217" cy="713" r="6" fill="#808080"/><circle cx="217" cy="735" r="6" fill="#808080"/><circle cx="217" cy="757" r="6" fill="#808080"/><circle cx="217" cy="779" r="6" fill="#808080"/><circle cx="217" cy="801" r="6" fill="#808080"/><circle cx="217" cy="823" r="6" fill="#808080"/></svg>
<div class="m22" style="left:3px;top:635px;width:44px;height:22px;background:#4040ff;color:#fff;padding-left:2px;line-height:22px;border-radius:2px">RIP</div>
<div style="left:1721px;top:41px;width:838px;height:32px;background:#fdfdfd;border:1px solid #c4c4c4;border-radius:4px"></div>
<div class="cj16" style="left:2108.5px;top:47.5px">隐藏</div>
<div style="left:2141.5px;top:47.5px;font:14.5px/18px 'Liberation Sans',sans-serif;letter-spacing:0px">FPU</div>
<div style="left:1720px;top:74px;width:840px;height:560px;background:#f0f0f0"></div>
<div style="left:1720px;top:74px;width:814px;height:530px;background:#fff8f0;border-left:1.5px solid #7a828f;border-top:1.5px solid #7a828f;overflow:hidden">
<div style="left:70.5px;top:8.5px;width:155px;height:16px;background:#eeeeee"></div>
<div class="m16" style="left:10.5px;top:9.5px;">RAX</div>
<div class="m16" style="left:71.0px;top:9.5px;color:#ff0000;">0000000000000000</div>
<div class="m16" style="left:10.5px;top:25.5px;">RBX</div>
<div class="m16" style="left:71.0px;top:25.5px;">0000000000000000</div>
<div class="m16" style="left:10.5px;top:41.5px;color:#008300;">RCX</div>
<div class="m16" style="left:71.0px;top:41.5px;color:#ff0000;">0000000000000000</div>
<div class="m16" style="left:10.5px;top:57.5px;color:#008300;">RDX</div>
<div class="m16" style="left:71.0px;top:57.5px;color:#ff0000;">0000000000000000</div>
<div class="m16" style="left:10.5px;top:73.5px;">RBP</div>
<div class="m16" style="left:71.0px;top:73.5px;color:#ff0000;">000000000000001B</div>
<div class="m16" style="left:10.5px;top:89.5px;">RSP</div>
<div class="m16" style="left:71.0px;top:89.5px;">0000007A6D0FF640</div>
<div class="m16" style="left:10.5px;top:105.5px;">RSI</div>
<div class="m16" style="left:71.0px;top:105.5px;">0000024E3785F690</div>
<div class="m16" style="left:10.5px;top:121.5px;">RDI</div>
<div class="m16" style="left:71.0px;top:121.5px;">0000007A6D0FF7D0</div>
<div class="m16" style="left:10.5px;top:153.5px;color:#008300;">R8</div>
<div class="m16" style="left:71.0px;top:153.5px;color:#ff0000;">0000000000000000</div>
<div class="m16" style="left:10.5px;top:169.5px;color:#008300;">R9</div>
<div class="m16" style="left:71.0px;top:169.5px;color:#ff0000;">000000000000001B</div>
<div class="m16" style="left:10.5px;top:185.5px;">R10</div>
<div class="m16" style="left:71.0px;top:185.5px;color:#ff0000;">0000024E3785F6AA</div>
<div class="m16" style="left:274.5px;top:185.5px;">L&quot;&#x27;&quot;</div>
<div class="m16" style="left:10.5px;top:201.5px;">R11</div>
<div class="m16" style="left:71.0px;top:201.5px;color:#ff0000;">0000024E378583A4</div>
<div class="m16" style="left:10.5px;top:217.5px;">R12</div>
<div class="m16" style="left:71.0px;top:217.5px;">0000000000000000</div>
<div style="left:10.5px;top:229.0px;width:29px;height:3px;background:#008300"></div>
<div class="m16" style="left:10.5px;top:233.5px;">R13</div>
<div class="m16" style="left:71.0px;top:233.5px;">0000024E378583A4</div>
<div class="m16" style="left:10.5px;top:249.5px;">R14</div>
<div class="m16" style="left:71.0px;top:249.5px;">0000024E378583A4</div>
<div class="m16" style="left:10.5px;top:265.5px;">R15</div>
<div class="m16" style="left:71.0px;top:265.5px;">0000024E37858390</div>
<div class="m16" style="left:274.5px;top:265.5px;">&quot;11111111111111111111&quot;</div>
<div class="m16" style="left:10.5px;top:297.5px;">RIP</div>
<div class="m16" style="left:71.0px;top:297.5px;color:#ff0000;">00007FF688AA231B</div>
<div class="m16" style="left:274.5px;top:297.5px;">acefirstround.00007FF688AA231B</div>
<div class="m16" style="left:10.5px;top:329.5px;">RFLAGS</div>
<div class="m16" style="left:101.0px;top:329.5px;color:#ff0000;">0000000000000344</div>
<div style="left:10.5px;top:356.0px;width:20px;height:3px;background:#c00000"></div>
<div style="left:70.5px;top:356.0px;width:20px;height:3px;background:#c00000"></div>
<div class="m16" style="left:10.5px;top:345.5px;">ZF</div>
<div class="m16" style="left:40.5px;top:345.5px;color:#ff0000;">1</div>
<div class="m16" style="left:70.5px;top:345.5px;">PF</div>
<div class="m16" style="left:100.5px;top:345.5px;color:#ff0000;">1</div>
<div class="m16" style="left:130.5px;top:345.5px;">AF</div>
<div class="m16" style="left:160.5px;top:345.5px;">0</div>
<div style="left:10.5px;top:372.0px;width:20px;height:3px;background:#c00000"></div>
<div style="left:70.5px;top:372.0px;width:20px;height:3px;background:#c00000"></div>
<div class="m16" style="left:10.5px;top:361.5px;">OF</div>
<div class="m16" style="left:40.5px;top:361.5px;">0</div>
<div class="m16" style="left:70.5px;top:361.5px;">SF</div>
<div class="m16" style="left:100.5px;top:361.5px;">0</div>
<div class="m16" style="left:130.5px;top:361.5px;">DF</div>
<div class="m16" style="left:160.5px;top:361.5px;">0</div>
<div style="left:10.5px;top:388.0px;width:20px;height:3px;background:#c00000"></div>
<div class="m16" style="left:10.5px;top:377.5px;">CF</div>
<div class="m16" style="left:40.5px;top:377.5px;">0</div>
<div class="m16" style="left:70.5px;top:377.5px;">TF</div>
<div class="m16" style="left:100.5px;top:377.5px;">1</div>
<div class="m16" style="left:130.5px;top:377.5px;">IF</div>
<div class="m16" style="left:160.5px;top:377.5px;">1</div>
<div class="m16" style="left:10.5px;top:409.5px;">LastError</div>
<div class="m16" style="left:121.0px;top:409.5px;">00000000 (ERROR_SUCCESS)</div>
<div class="m16" style="left:10.5px;top:425.5px;">LastStatus</div>
<div class="m16" style="left:121.0px;top:425.5px;">00000000 (STATUS_SUCCESS)</div>
<div class="m16" style="left:10.5px;top:457.5px;">GS</div>
<div class="m16" style="left:40.5px;top:457.5px;">002B</div>
<div class="m16" style="left:100.5px;top:457.5px;">FS</div>
<div class="m16" style="left:130.5px;top:457.5px;">0053</div>
<div class="m16" style="left:10.5px;top:473.5px;">ES</div>
<div class="m16" style="left:40.5px;top:473.5px;">002B</div>
<div class="m16" style="left:100.5px;top:473.5px;">DS</div>
<div class="m16" style="left:130.5px;top:473.5px;">002B</div>
<div class="m16" style="left:10.5px;top:489.5px;">CS</div>
<div class="m16" style="left:40.5px;top:489.5px;">0033</div>
<div class="m16" style="left:100.5px;top:489.5px;">SS</div>
<div class="m16" style="left:130.5px;top:489.5px;">002B</div>
<div class="m16" style="left:10.5px;top:521.5px;">ST(0)</div>
<div class="m16" style="left:71.0px;top:521.5px;">00000000000000000000 x87r0</div>
<div class="m16" style="left:357.5px;top:521.5px;">0.000000000000000000</div>
<div style="left:330.5px;top:518.5px;font:16px/16px 'Liberation Serif','Noto Serif CJK SC',serif;white-space:pre;color:#000">空</div>
</div>
<div style="left:2542px;top:100px;width:11px;height:146px;background:#8a8a8a"></div>
<div style="left:1746px;top:612px;width:309px;height:11px;background:#8a8a8a"></div>
<div style="left:2534px;top:75px;width:1px;height:529px;background:#fff"></div>
<div style="left:1720px;top:632px;width:628px;height:38px;background:#fdfdfd;border-radius:4px"></div>
<div class="cj" style="left:1728px;top:640.8px;line-height:20px">默认</div>
<div style="left:1773px;top:641.8px;font:16.67px/20px 'Liberation Mono',monospace;letter-spacing:-1px;white-space:pre">(x64 fastcall)</div>
<svg style="position:absolute;left:2325px;top:645px" width="12" height="8"><path d="M2.5 2.5H9.5L6 6.5Z" fill="#000"/><rect x="2.5" y="2" width="7" height="1.2" fill="#000"/></svg>
<div style="left:2355px;top:633px;width:66px;height:34px;background:#fff;border-bottom:1px solid #b0b0b0"></div>
<div style="left:2360.5px;top:641.5px;font:17px/20px 'Liberation Serif',serif">5</div>
<div style="left:2389px;top:635px;width:30px;height:15.5px;background:#f0f0f0;border:1px solid #c8c8c8"></div>
<div style="left:2389px;top:650px;width:30px;height:15px;background:#f0f0f0;border:1px solid #c8c8c8"></div>
<svg style="position:absolute;left:2398px;top:638px" width="12" height="24"><path d="M1.5 6.5L6 1.5L10.5 6.5Z" fill="#000"/><path d="M1.5 16L6 21L10.5 16Z" fill="#000"/></svg>
<div style="left:2428px;top:640px;width:20px;height:20px;background:#f6f6f6;border:1px solid #a0a0a0;border-radius:3px"></div>
<div class="cj" style="left:2454px;top:640.8px;line-height:20px;letter-spacing:0">解锁</div>
<div style="left:1720px;top:670px;width:839px;height:185px;background:#f0f0f0;border:1px solid #828790"></div>
<div style="left:1721px;top:671px;width:811px;height:183px;background:#fff8f0;overflow:hidden">
<div style="left:0;top:1px;width:811px;height:29.6px;background:#c0c0c0"></div>
<div class="m28" style="left:9.5px;top:1px;letter-spacing:-0.21px">1: rcx 0000000000000000 0000000000000000</div>
<div class="m28" style="left:9.5px;top:31px;letter-spacing:-0.21px">2: rdx 0000000000000000 0000000000000000</div>
<div class="m28" style="left:9.5px;top:61px;letter-spacing:-0.21px">3: r8 0000000000000000 0000000000000000</div>
<div class="m28" style="left:9.5px;top:91px;letter-spacing:-0.21px">4: r9 000000000000001B 000000000000001B</div>
<div class="m28" style="left:9.5px;top:121px;letter-spacing:-0.21px">5: [rsp+28] 0000024E3785F690 0000024E3785F690</div>
</div>
<svg style="position:absolute;left:2538px;top:680px" width="14" height="170"><path d="M1.5 10.5L7 2L12.5 10.5Z" fill="#a6a6a6"/><path d="M1.5 156.5L7 165L12.5 156.5Z" fill="#a6a6a6"/></svg>
<div style="left:0;top:897px;width:1548px;height:1px;background:#dcdcdc"></div>
<div class="tab" style="left:121.5px;top:862px;width:123.0px;height:35.5px"></div>
<svg style="position:absolute;left:140.0px;top:867px" width="24" height="24" viewBox="0 0 24 24"><defs><linearGradient id="gdm" x1="0" y1="0" x2="0" y2="1"><stop offset="0" stop-color="#eceef4"/><stop offset="1" stop-color="#c8ccd8"/></linearGradient></defs><rect x="6" y="1" width="17.5" height="17" rx="1" fill="url(#gdm)"/><rect x="9.5" y="2.5" width="2.6" height="14" fill="#b4b8c8"/><rect x="14" y="2.5" width="2.6" height="14" fill="#b4b8c8"/><rect x="18.5" y="2.5" width="2.6" height="14" fill="#b0c4bc"/><rect x="0" y="5" width="8" height="13.5" fill="#e4b428"/><rect x="0.5" y="8" width="4.5" height="5" fill="#6494cc"/><rect x="5.5" y="6" width="2" height="12" fill="#d09c48"/><rect x="0" y="18" width="23.5" height="2" fill="#8c8c90"/><circle cx="5" cy="20.3" r="2.6" fill="#5a5a5a"/><circle cx="18.5" cy="20.3" r="2.6" fill="#5a5a5a"/><circle cx="5" cy="20.3" r="1" fill="#aaa"/><circle cx="18.5" cy="20.3" r="1" fill="#aaa"/></svg>
<div class="cj" style="left:171.9px;top:870.5px">内存</div><div class="ui" style="left:218.8px;top:871.3px;font-size:17.5px;transform:scaleX(0.914);transform-origin:0 0">2</div>
<div class="tab" style="left:243.5px;top:862px;width:123.0px;height:35.5px"></div>
<svg style="position:absolute;left:262.0px;top:867px" width="24" height="24" viewBox="0 0 24 24"><defs><linearGradient id="gdm" x1="0" y1="0" x2="0" y2="1"><stop offset="0" stop-color="#eceef4"/><stop offset="1" stop-color="#c8ccd8"/></linearGradient></defs><rect x="6" y="1" width="17.5" height="17" rx="1" fill="url(#gdm)"/><rect x="9.5" y="2.5" width="2.6" height="14" fill="#b4b8c8"/><rect x="14" y="2.5" width="2.6" height="14" fill="#b4b8c8"/><rect x="18.5" y="2.5" width="2.6" height="14" fill="#b0c4bc"/><rect x="0" y="5" width="8" height="13.5" fill="#e4b428"/><rect x="0.5" y="8" width="4.5" height="5" fill="#6494cc"/><rect x="5.5" y="6" width="2" height="12" fill="#d09c48"/><rect x="0" y="18" width="23.5" height="2" fill="#8c8c90"/><circle cx="5" cy="20.3" r="2.6" fill="#5a5a5a"/><circle cx="18.5" cy="20.3" r="2.6" fill="#5a5a5a"/><circle cx="5" cy="20.3" r="1" fill="#aaa"/><circle cx="18.5" cy="20.3" r="1" fill="#aaa"/></svg>
<div class="cj" style="left:293.9px;top:870.5px">内存</div><div class="ui" style="left:340.8px;top:871.3px;font-size:17.5px;transform:scaleX(0.914);transform-origin:0 0">3</div>
<div class="tab" style="left:365.5px;top:862px;width:123.0px;height:35.5px"></div>
<svg style="position:absolute;left:384.0px;top:867px" width="24" height="24" viewBox="0 0 24 24"><defs><linearGradient id="gdm" x1="0" y1="0" x2="0" y2="1"><stop offset="0" stop-color="#eceef4"/><stop offset="1" stop-color="#c8ccd8"/></linearGradient></defs><rect x="6" y="1" width="17.5" height="17" rx="1" fill="url(#gdm)"/><rect x="9.5" y="2.5" width="2.6" height="14" fill="#b4b8c8"/><rect x="14" y="2.5" width="2.6" height="14" fill="#b4b8c8"/><rect x="18.5" y="2.5" width="2.6" height="14" fill="#b0c4bc"/><rect x="0" y="5" width="8" height="13.5" fill="#e4b428"/><rect x="0.5" y="8" width="4.5" height="5" fill="#6494cc"/><rect x="5.5" y="6" width="2" height="12" fill="#d09c48"/><rect x="0" y="18" width="23.5" height="2" fill="#8c8c90"/><circle cx="5" cy="20.3" r="2.6" fill="#5a5a5a"/><circle cx="18.5" cy="20.3" r="2.6" fill="#5a5a5a"/><circle cx="5" cy="20.3" r="1" fill="#aaa"/><circle cx="18.5" cy="20.3" r="1" fill="#aaa"/></svg>
<div class="cj" style="left:415.9px;top:870.5px">内存</div><div class="ui" style="left:462.8px;top:871.3px;font-size:17.5px;transform:scaleX(0.914);transform-origin:0 0">4</div>
<div class="tab" style="left:487.5px;top:862px;width:123.0px;height:35.5px"></div>
<svg style="position:absolute;left:506.0px;top:867px" width="24" height="24" viewBox="0 0 24 24"><defs><linearGradient id="gdm" x1="0" y1="0" x2="0" y2="1"><stop offset="0" stop-color="#eceef4"/><stop offset="1" stop-color="#c8ccd8"/></linearGradient></defs><rect x="6" y="1" width="17.5" height="17" rx="1" fill="url(#gdm)"/><rect x="9.5" y="2.5" width="2.6" height="14" fill="#b4b8c8"/><rect x="14" y="2.5" width="2.6" height="14" fill="#b4b8c8"/><rect x="18.5" y="2.5" width="2.6" height="14" fill="#b0c4bc"/><rect x="0" y="5" width="8" height="13.5" fill="#e4b428"/><rect x="0.5" y="8" width="4.5" height="5" fill="#6494cc"/><rect x="5.5" y="6" width="2" height="12" fill="#d09c48"/><rect x="0" y="18" width="23.5" height="2" fill="#8c8c90"/><circle cx="5" cy="20.3" r="2.6" fill="#5a5a5a"/><circle cx="18.5" cy="20.3" r="2.6" fill="#5a5a5a"/><circle cx="5" cy="20.3" r="1" fill="#aaa"/><circle cx="18.5" cy="20.3" r="1" fill="#aaa"/></svg>
<div class="cj" style="left:537.9px;top:870.5px">内存</div><div class="ui" style="left:584.8px;top:871.3px;font-size:17.5px;transform:scaleX(0.914);transform-origin:0 0">5</div>
<div class="tab" style="left:609.5px;top:862px;width:123.0px;height:35.5px"></div>
<svg style="position:absolute;left:628.0px;top:867px" width="24" height="24" viewBox="0 0 24 24"><path d="M2 1l6 3.5h8L22 1l-1 7.5c1.5 3 1.5 6 0 8.500C19 21 16 23 12 23s-7-2-9-6c-1.500-2.500-1.500-5.500 0-8.500Z" fill="#c48c44"/><ellipse cx="12" cy="15.5" rx="6" ry="5.5" fill="#e8c48c"/><circle cx="7.5" cy="10.5" r="1.5" fill="#3a2a1a"/><circle cx="16.5" cy="10.5" r="1.5" fill="#3a2a1a"/><ellipse cx="12" cy="14.500" rx="1.800" ry="1.200" fill="#4a3020"/><path d="M9 18c2 1.500 4 1.500 6 0" stroke="#7a5030" stroke-width="1" fill="none"/></svg>
<div class="cj" style="left:659.9px;top:870.5px">监视</div><div class="ui" style="left:706.8px;top:871.3px;font-size:17.5px;transform:scaleX(0.914);transform-origin:0 0">1</div>
<div class="tab" style="left:731.5px;top:862px;width:141.0px;height:35.5px"></div>
<svg style="position:absolute;left:750.0px;top:867px" width="24" height="24" viewBox="0 0 24 24"><path d="M2.5 4.500V20.500M21.500 4.500V20.500" stroke="#484848" stroke-width="1.600"/><path d="M5.500 9.500c2 0 3 6 5 6M10.500 9.500c-2 0-3 6-5 6" stroke="#707070" stroke-width="1.300" fill="none"/><path d="M13 11.500h5.500M13 14.500h5.500" stroke="#707070" stroke-width="1.300"/></svg>
<div class="cj" style="left:781.9px;top:870.5px">局部变量</div>
<div class="tab" style="left:871.5px;top:862px;width:119.0px;height:35.5px"></div>
<svg style="position:absolute;left:890.0px;top:867px" width="24" height="24" viewBox="0 0 24 24"><path d="M4.5 22.5L15 8C19 2 10 -1 8 6" fill="none" stroke="#f6e0e0" stroke-width="4.8" stroke-linecap="round"/><path d="M4.5 22.5L15 8C19 2 10 -1 8 6" fill="none" stroke="#de5866" stroke-width="4.8" stroke-dasharray="2.8 2.8"/></svg>
<div class="cj" style="left:921.9px;top:870.5px">结构体</div>
<div style="left:1px;top:858px;width:124px;height:40.5px;background:#fafafa;border:1px solid #e2e2e2;border-bottom:none"></div>
<svg style="position:absolute;left:18px;top:865px" width="24" height="24" viewBox="0 0 24 24"><defs><linearGradient id="gdm" x1="0" y1="0" x2="0" y2="1"><stop offset="0" stop-color="#eceef4"/><stop offset="1" stop-color="#c8ccd8"/></linearGradient></defs><rect x="6" y="1" width="17.5" height="17" rx="1" fill="url(#gdm)"/><rect x="9.5" y="2.5" width="2.6" height="14" fill="#b4b8c8"/><rect x="14" y="2.5" width="2.6" height="14" fill="#b4b8c8"/><rect x="18.5" y="2.5" width="2.6" height="14" fill="#b0c4bc"/><rect x="0" y="5" width="8" height="13.5" fill="#e4b428"/><rect x="0.5" y="8" width="4.5" height="5" fill="#6494cc"/><rect x="5.5" y="6" width="2" height="12" fill="#d09c48"/><rect x="0" y="18" width="23.5" height="2" fill="#8c8c90"/><circle cx="5" cy="20.3" r="2.6" fill="#5a5a5a"/><circle cx="18.5" cy="20.3" r="2.6" fill="#5a5a5a"/><circle cx="5" cy="20.3" r="1" fill="#aaa"/><circle cx="18.5" cy="20.3" r="1" fill="#aaa"/></svg>
<div class="cj" style="left:49.9px;top:868.5px">内存</div><div class="ui" style="left:96.8px;top:869.3px;font-size:17.5px;transform:scaleX(0.914);transform-origin:0 0">1</div>
<div style="left:1px;top:898px;width:1546px;height:450px;background:#f0f0f0;border:1px solid #7a8290"></div>
<div style="left:2px;top:899px;width:1518px;height:447px;background:#fff8f0;overflow:hidden">
<div style="left:0px;top:1px;width:271.5px;height:36px;background:#c0c0c0;border-right:4px solid #808080;border-bottom:4px solid #808080;overflow:hidden"><div class="cj27" style="left:8px;top:1px">地址</div></div><svg style="position:absolute;left:267.5px;top:1px" width="4" height="4"><path d="M0 0H4L0 4Z" fill="#c0c0c0"/></svg><svg style="position:absolute;left:0px;top:33px" width="4" height="4"><path d="M0 0H4L0 4Z" fill="#c0c0c0"/></svg>
<div style="left:272.5px;top:1px;width:766.5px;height:36px;background:#c0c0c0;border-right:4px solid #808080;border-bottom:4px solid #808080;overflow:hidden"><div class="cj27" style="left:8px;top:1px">十六进制</div></div><svg style="position:absolute;left:1035px;top:1px" width="4" height="4"><path d="M0 0H4L0 4Z" fill="#c0c0c0"/></svg><svg style="position:absolute;left:272.5px;top:33px" width="4" height="4"><path d="M0 0H4L0 4Z" fill="#c0c0c0"/></svg>
<div style="left:1040px;top:1px;width:271px;height:36px;background:#c0c0c0;border-right:4px solid #808080;border-bottom:4px solid #808080;overflow:hidden"><div class="m28" style="left:9px;top:3.5px">ASCII</div></div><svg style="position:absolute;left:1307px;top:1px" width="4" height="4"><path d="M0 0H4L0 4Z" fill="#c0c0c0"/></svg><svg style="position:absolute;left:1040px;top:33px" width="4" height="4"><path d="M0 0H4L0 4Z" fill="#c0c0c0"/></svg>
<div style="left:1312px;top:1px;width:206px;height:36px;background:#c0c0c0;border-right:4px solid #808080;border-bottom:4px solid #808080;overflow:hidden"></div><svg style="position:absolute;left:1514px;top:1px" width="4" height="4"><path d="M0 0H4L0 4Z" fill="#c0c0c0"/></svg><svg style="position:absolute;left:1312px;top:33px" width="4" height="4"><path d="M0 0H4L0 4Z" fill="#c0c0c0"/></svg>
<div style="left:752px;top:277px;width:48px;height:30px;background:#c0c0c0"></div>
<div style="left:1209px;top:277px;width:16px;height:30px;background:#c0c0c0"></div>
<div style="left:270px;top:37px;width:2px;height:420px;background:#808080"></div>
<div style="left:463px;top:37px;width:2px;height:420px;background:#909090"></div>
<div style="left:655.5px;top:37px;width:2px;height:420px;background:#909090"></div>
<div style="left:847.5px;top:37px;width:2px;height:420px;background:#909090"></div>
<div style="left:1037.5px;top:37px;width:2px;height:420px;background:#808080"></div>
<div style="left:1309.5px;top:37px;width:2px;height:420px;background:#808080"></div>
<div style="left:1515px;top:37px;width:2px;height:420px;background:#808080"></div>
<div class="m28" style="left:8px;top:36.5px;width:262px;overflow:hidden">0000024E3785F690</div>
<div class="m28" style="left:280px;top:36.5px"><span class="hb" style="color:#800080">21</span><span class="hb" style="color:#800080">28</span><span class="hb" style="color:#000">14</span><span class="hb" style="color:#000">1E</span><span class="hb" style="color:#800080">24</span><span class="hb" style="color:#000">06</span><span class="hb" style="color:#800080">2E</span><span class="hb" style="color:#800080">2E</span><span class="hb" style="color:#800080">32</span><span class="hb" style="color:#800080">2A</span><span class="hb" style="color:#800080">0A</span><span class="hb" style="color:#000">05</span><span class="hb" style="color:#800080">31</span><span class="hb" style="color:#000">1A</span><span class="hb" style="color:#000">19</span><span class="hb" style="color:#000">19</span></div>
<div class="m28" style="left:1048.5px;top:36.5px"><span class="ab" style="color:#800080">!</span><span class="ab" style="color:#800080">(</span><span class="ab" style="color:#000">.</span><span class="ab" style="color:#000">.</span><span class="ab" style="color:#800080">$</span><span class="ab" style="color:#000">.</span><span class="ab" style="color:#800080">.</span><span class="ab" style="color:#800080">.</span><span class="ab" style="color:#800080">2</span><span class="ab" style="color:#800080">*</span><span class="ab" style="color:#800080">.</span><span class="ab" style="color:#000">.</span><span class="ab" style="color:#800080">1</span><span class="ab" style="color:#000">.</span><span class="ab" style="color:#000">.</span><span class="ab" style="color:#000">.</span></div>
<div class="m28" style="left:8px;top:66.5px;width:262px;overflow:hidden">0000024E3785F6A0</div>
<div class="m28" style="left:280px;top:66.5px"><span class="hb" style="color:#800080">29</span><span class="hb" style="color:#000">13</span><span class="hb" style="color:#800080">20</span><span class="hb" style="color:#800080">32</span><span class="hb" style="color:#000">05</span><span class="hb" style="color:#800080">0A</span><span class="hb" style="color:#800080">29</span><span class="hb" style="color:#800080">39</span><span class="hb" style="color:#000">19</span><span class="hb" style="color:#800080">2B</span><span class="hb" style="color:#800080">27</span><span class="hb" style="color:#008000">00</span><span class="hb" style="color:#008000">00</span><span class="hb" style="color:#008000">00</span><span class="hb" style="color:#008000">00</span><span class="hb" style="color:#008000">00</span></div>
<div class="m28" style="left:1048.5px;top:66.5px"><span class="ab" style="color:#800080">)</span><span class="ab" style="color:#000">.</span><span class="ab" style="color:#800080"> </span><span class="ab" style="color:#800080">2</span><span class="ab" style="color:#000">.</span><span class="ab" style="color:#800080">.</span><span class="ab" style="color:#800080">)</span><span class="ab" style="color:#800080">9</span><span class="ab" style="color:#000">.</span><span class="ab" style="color:#800080">+</span><span class="ab" style="color:#800080">&#x27;</span><span class="ab" style="color:#008000">.</span><span class="ab" style="color:#008000">.</span><span class="ab" style="color:#008000">.</span><span class="ab" style="color:#008000">.</span><span class="ab" style="color:#008000">.</span></div>
<div class="m28" style="left:8px;top:96.5px;width:262px;overflow:hidden">0000024E3785F6B0</div>
<div class="m28" style="left:280px;top:96.5px"><span class="hb" style="color:#008000">00</span><span class="hb" style="color:#008000">00</span><span class="hb" style="color:#008000">00</span><span class="hb" style="color:#008000">00</span><span class="hb" style="color:#008000">00</span><span class="hb" style="color:#008000">00</span><span class="hb" style="color:#008000">00</span><span class="hb" style="color:#008000">00</span><span class="hb" style="color:#000">1D</span><span class="hb" style="color:#000">FB</span><span class="hb" style="color:#000">07</span><span class="hb" style="color:#000">1F</span><span class="hb" style="color:#008000">00</span><span class="hb" style="color:#800080">09</span><span class="hb" style="color:#008000">00</span><span class="hb" style="color:#000">80</span></div>
<div class="m28" style="left:1048.5px;top:96.5px"><span class="ab" style="color:#008000">.</span><span class="ab" style="color:#008000">.</span><span class="ab" style="color:#008000">.</span><span class="ab" style="color:#008000">.</span><span class="ab" style="color:#008000">.</span><span class="ab" style="color:#008000">.</span><span class="ab" style="color:#008000">.</span><span class="ab" style="color:#008000">.</span><span class="ab" style="color:#000">.</span><span class="ab" style="color:#000">û</span><span class="ab" style="color:#000">.</span><span class="ab" style="color:#000">.</span><span class="ab" style="color:#008000">.</span><span class="ab" style="color:#800080">.</span><span class="ab" style="color:#008000">.</span><span class="ab" style="color:#000">.</span></div>
<div class="m28" style="left:8px;top:126.5px;width:262px;overflow:hidden">0000024E3785F6C0</div>
<div class="m28" style="left:280px;top:126.5px"><span class="hb" style="color:#008000">00</span><span class="hb" style="color:#008000">00</span><span class="hb" style="color:#008000">00</span><span class="hb" style="color:#008000">00</span><span class="hb" style="color:#008000">00</span><span class="hb" style="color:#008000">00</span><span class="hb" style="color:#008000">00</span><span class="hb" style="color:#008000">00</span><span class="hb" style="color:#008000">00</span><span class="hb" style="color:#008000">00</span><span class="hb" style="color:#008000">00</span><span class="hb" style="color:#008000">00</span><span class="hb" style="color:#008000">00</span><span class="hb" style="color:#008000">00</span><span class="hb" style="color:#008000">00</span><span class="hb" style="color:#008000">00</span></div>
<div class="m28" style="left:1048.5px;top:126.5px"><span class="ab" style="color:#008000">.</span><span class="ab" style="color:#008000">.</span><span class="ab" style="color:#008000">.</span><span class="ab" style="color:#008000">.</span><span class="ab" style="color:#008000">.</span><span class="ab" style="color:#008000">.</span><span class="ab" style="color:#008000">.</span><span class="ab" style="color:#008000">.</span><span class="ab" style="color:#008000">.</span><span class="ab" style="color:#008000">.</span><span class="ab" style="color:#008000">.</span><span class="ab" style="color:#008000">.</span><span class="ab" style="color:#008000">.</span><span class="ab" style="color:#008000">.</span><span class="ab" style="color:#008000">.</span><span class="ab" style="color:#008000">.</span></div>
<div class="m28" style="left:8px;top:156.5px;width:262px;overflow:hidden">0000024E3785F6D0</div>
<div class="m28" style="left:280px;top:156.5px"><span class="hb" style="color:#008000">00</span><span class="hb" style="color:#008000">00</span><span class="hb" style="color:#008000">00</span><span class="hb" style="color:#008000">00</span><span class="hb" style="color:#008000">00</span><span class="hb" style="color:#008000">00</span><span class="hb" style="color:#008000">00</span><span class="hb" style="color:#008000">00</span><span class="hb" style="color:#008000">00</span><span class="hb" style="color:#008000">00</span><span class="hb" style="color:#008000">00</span><span class="hb" style="color:#008000">00</span><span class="hb" style="color:#008000">00</span><span class="hb" style="color:#008000">00</span><span class="hb" style="color:#008000">00</span><span class="hb" style="color:#008000">00</span></div>
<div class="m28" style="left:1048.5px;top:156.5px"><span class="ab" style="color:#008000">.</span><span class="ab" style="color:#008000">.</span><span class="ab" style="color:#008000">.</span><span class="ab" style="color:#008000">.</span><span class="ab" style="color:#008000">.</span><span class="ab" style="color:#008000">.</span><span class="ab" style="color:#008000">.</span><span class="ab" style="color:#008000">.</span><span class="ab" style="color:#008000">.</span><span class="ab" style="color:#008000">.</span><span class="ab" style="color:#008000">.</span><span class="ab" style="color:#008000">.</span><span class="ab" style="color:#008000">.</span><span class="ab" style="color:#008000">.</span><span class="ab" style="color:#008000">.</span><span class="ab" style="color:#008000">.</span></div>
<div class="m28" style="left:8px;top:186.5px;width:262px;overflow:hidden">0000024E3785F6E0</div>
<div class="m28" style="left:280px;top:186.5px"><span class="hb" style="color:#008000">00</span><span class="hb" style="color:#008000">00</span><span class="hb" style="color:#008000">00</span><span class="hb" style="color:#008000">00</span><span class="hb" style="color:#008000">00</span><span class="hb" style="color:#008000">00</span><span class="hb" style="color:#008000">00</span><span class="hb" style="color:#008000">00</span><span class="hb" style="color:#000">18</span><span class="hb" style="color:#000">FB</span><span class="hb" style="color:#800080">3A</span><span class="hb" style="color:#000">1F</span><span class="hb" style="color:#008000">00</span><span class="hb" style="color:#800080">0A</span><span class="hb" style="color:#008000">00</span><span class="hb" style="color:#000">80</span></div>
<div class="m28" style="left:1048.5px;top:186.5px"><span class="ab" style="color:#008000">.</span><span class="ab" style="color:#008000">.</span><span class="ab" style="color:#008000">.</span><span class="ab" style="color:#008000">.</span><span class="ab" style="color:#008000">.</span><span class="ab" style="color:#008000">.</span><span class="ab" style="color:#008000">.</span><span class="ab" style="color:#008000">.</span><span class="ab" style="color:#000">.</span><span class="ab" style="color:#000">û</span><span class="ab" style="color:#800080">:</span><span class="ab" style="color:#000">.</span><span class="ab" style="color:#008000">.</span><span class="ab" style="color:#800080">.</span><span class="ab" style="color:#008000">.</span><span class="ab" style="color:#000">.</span></div>
<div class="m28" style="left:8px;top:216.5px;width:262px;overflow:hidden">0000024E3785F6F0</div>
<div class="m28" style="left:280px;top:216.5px"><span class="hb" style="color:#008000">00</span><span class="hb" style="color:#008000">00</span><span class="hb" style="color:#008000">00</span><span class="hb" style="color:#008000">00</span><span class="hb" style="color:#008000">00</span><span class="hb" style="color:#008000">00</span><span class="hb" style="color:#008000">00</span><span class="hb" style="color:#008000">00</span><span class="hb" style="color:#008000">00</span><span class="hb" style="color:#008000">00</span><span class="hb" style="color:#008000">00</span><span class="hb" style="color:#008000">00</span><span class="hb" style="color:#008000">00</span><span class="hb" style="color:#008000">00</span><span class="hb" style="color:#008000">00</span><span class="hb" style="color:#008000">00</span></div>
<div class="m28" style="left:1048.5px;top:216.5px"><span class="ab" style="color:#008000">.</span><span class="ab" style="color:#008000">.</span><span class="ab" style="color:#008000">.</span><span class="ab" style="color:#008000">.</span><span class="ab" style="color:#008000">.</span><span class="ab" style="color:#008000">.</span><span class="ab" style="color:#008000">.</span><span class="ab" style="color:#008000">.</span><span class="ab" style="color:#008000">.</span><span class="ab" style="color:#008000">.</span><span class="ab" style="color:#008000">.</span><span class="ab" style="color:#008000">.</span><span class="ab" style="color:#008000">.</span><span class="ab" style="color:#008000">.</span><span class="ab" style="color:#008000">.</span><span class="ab" style="color:#008000">.</span></div>
<div class="m28" style="left:8px;top:246.5px;width:262px;overflow:hidden">0000024E3785F700</div>
<div class="m28" style="left:280px;top:246.5px"><span class="hb" style="color:#008000">00</span><span class="hb" style="color:#008000">00</span><span class="hb" style="color:#008000">00</span><span class="hb" style="color:#008000">00</span><span class="hb" style="color:#008000">00</span><span class="hb" style="color:#008000">00</span><span class="hb" style="color:#008000">00</span><span class="hb" style="color:#008000">00</span><span class="hb" style="color:#008000">00</span><span class="hb" style="color:#008000">00</span><span class="hb" style="color:#008000">00</span><span class="hb" style="color:#008000">00</span><span class="hb" style="color:#008000">00</span><span class="hb" style="color:#008000">00</span><span class="hb" style="color:#008000">00</span><span class="hb" style="color:#008000">00</span></div>
<div class="m28" style="left:1048.5px;top:246.5px"><span class="ab" style="color:#008000">.</span><span class="ab" style="color:#008000">.</span><span class="ab" style="color:#008000">.</span><span class="ab" style="color:#008000">.</span><span class="ab" style="color:#008000">.</span><span class="ab" style="color:#008000">.</span><span class="ab" style="color:#008000">.</span><span class="ab" style="color:#008000">.</span><span class="ab" style="color:#008000">.</span><span class="ab" style="color:#008000">.</span><span class="ab" style="color:#008000">.</span><span class="ab" style="color:#008000">.</span><span class="ab" style="color:#008000">.</span><span class="ab" style="color:#008000">.</span><span class="ab" style="color:#008000">.</span><span class="ab" style="color:#008000">.</span></div>
<div class="m28" style="left:8px;top:276.5px;width:262px;overflow:hidden">0000024E3785F710</div>
<div class="m28" style="left:280px;top:276.5px"><span class="hb" style="color:#008000">00</span><span class="hb" style="color:#008000">00</span><span class="hb" style="color:#008000">00</span><span class="hb" style="color:#008000">00</span><span class="hb" style="color:#008000">00</span><span class="hb" style="color:#008000">00</span><span class="hb" style="color:#008000">00</span><span class="hb" style="color:#008000">00</span><span class="hb" style="color:#000">07</span><span class="hb" style="color:#000">FB</span><span class="hb" style="color:#800080">3D</span><span class="hb" style="color:#000">1F</span><span class="hb" style="color:#008000">00</span><span class="hb" style="color:#800080">0B</span><span class="hb" style="color:#008000">00</span><span class="hb" style="color:#000">80</span></div>
<div class="m28" style="left:1048.5px;top:276.5px"><span class="ab" style="color:#008000">.</span><span class="ab" style="color:#008000">.</span><span class="ab" style="color:#008000">.</span><span class="ab" style="color:#008000">.</span><span class="ab" style="color:#008000">.</span><span class="ab" style="color:#008000">.</span><span class="ab" style="color:#008000">.</span><span class="ab" style="color:#008000">.</span><span class="ab" style="color:#000">.</span><span class="ab" style="color:#000">û</span><span class="ab" style="color:#800080">=</span><span class="ab" style="color:#000">.</span><span class="ab" style="color:#008000">.</span><span class="ab" style="color:#800080">.</span><span class="ab" style="color:#008000">.</span><span class="ab" style="color:#000">.</span></div>
<div class="m28" style="left:8px;top:306.5px;width:262px;overflow:hidden">0000024E3785F720</div>
<div class="m28" style="left:280px;top:306.5px"><span class="hb" style="color:#008000">00</span><span class="hb" style="color:#008000">00</span><span class="hb" style="color:#008000">00</span><span class="hb" style="color:#008000">00</span><span class="hb" style="color:#008000">00</span><span class="hb" style="color:#008000">00</span><span class="hb" style="color:#008000">00</span><span class="hb" style="color:#008000">00</span><span class="hb" style="color:#008000">00</span><span class="hb" style="color:#008000">00</span><span class="hb" style="color:#008000">00</span><span class="hb" style="color:#008000">00</span><span class="hb" style="color:#008000">00</span><span class="hb" style="color:#008000">00</span><span class="hb" style="color:#008000">00</span><span class="hb" style="color:#008000">00</span></div>
<div class="m28" style="left:1048.5px;top:306.5px"><span class="ab" style="color:#008000">.</span><span class="ab" style="color:#008000">.</span><span class="ab" style="color:#008000">.</span><span class="ab" style="color:#008000">.</span><span class="ab" style="color:#008000">.</span><span class="ab" style="color:#008000">.</span><span class="ab" style="color:#008000">.</span><span class="ab" style="color:#008000">.</span><span class="ab" style="color:#008000">.</span><span class="ab" style="color:#008000">.</span><span class="ab" style="color:#008000">.</span><span class="ab" style="color:#008000">.</span><span class="ab" style="color:#008000">.</span><span class="ab" style="color:#008000">.</span><span class="ab" style="color:#008000">.</span><span class="ab" style="color:#008000">.</span></div>
<div class="m28" style="left:8px;top:336.5px;width:262px;overflow:hidden">0000024E3785F730</div>
<div class="m28" style="left:280px;top:336.5px"><span class="hb" style="color:#008000">00</span><span class="hb" style="color:#008000">00</span><span class="hb" style="color:#008000">00</span><span class="hb" style="color:#008000">00</span><span class="hb" style="color:#008000">00</span><span class="hb" style="color:#008000">00</span><span class="hb" style="color:#008000">00</span><span class="hb" style="color:#008000">00</span><span class="hb" style="color:#008000">00</span><span class="hb" style="color:#008000">00</span><span class="hb" style="color:#008000">00</span><span class="hb" style="color:#008000">00</span><span class="hb" style="color:#008000">00</span><span class="hb" style="color:#008000">00</span><span class="hb" style="color:#008000">00</span><span class="hb" style="color:#008000">00</span></div>
<div class="m28" style="left:1048.5px;top:336.5px"><span class="ab" style="color:#008000">.</span><span class="ab" style="color:#008000">.</span><span class="ab" style="color:#008000">.</span><span class="ab" style="color:#008000">.</span><span class="ab" style="color:#008000">.</span><span class="ab" style="color:#008000">.</span><span class="ab" style="color:#008000">.</span><span class="ab" style="color:#008000">.</span><span class="ab" style="color:#008000">.</span><span class="ab" style="color:#008000">.</span><span class="ab" style="color:#008000">.</span><span class="ab" style="color:#008000">.</span><span class="ab" style="color:#008000">.</span><span class="ab" style="color:#008000">.</span><span class="ab" style="color:#008000">.</span><span class="ab" style="color:#008000">.</span></div>
<div class="m28" style="left:8px;top:366.5px;width:262px;overflow:hidden">0000024E3785F740</div>
<div class="m28" style="left:280px;top:366.5px"><span class="hb" style="color:#008000">00</span><span class="hb" style="color:#008000">00</span><span class="hb" style="color:#008000">00</span><span class="hb" style="color:#008000">00</span><span class="hb" style="color:#008000">00</span><span class="hb" style="color:#008000">00</span><span class="hb" style="color:#008000">00</span><span class="hb" style="color:#008000">00</span><span class="hb" style="color:#000">02</span><span class="hb" style="color:#000">FB</span><span class="hb" style="color:#800080">30</span><span class="hb" style="color:#000">1F</span><span class="hb" style="color:#008000">00</span><span class="hb" style="color:#800080">0C</span><span class="hb" style="color:#008000">00</span><span class="hb" style="color:#000">92</span></div>
<div class="m28" style="left:1048.5px;top:366.5px"><span class="ab" style="color:#008000">.</span><span class="ab" style="color:#008000">.</span><span class="ab" style="color:#008000">.</span><span class="ab" style="color:#008000">.</span><span class="ab" style="color:#008000">.</span><span class="ab" style="color:#008000">.</span><span class="ab" style="color:#008000">.</span><span class="ab" style="color:#008000">.</span><span class="ab" style="color:#000">.</span><span class="ab" style="color:#000">û</span><span class="ab" style="color:#800080">0</span><span class="ab" style="color:#000">.</span><span class="ab" style="color:#008000">.</span><span class="ab" style="color:#800080">.</span><span class="ab" style="color:#008000">.</span><span class="ab" style="color:#000">.</span></div>
<div class="m28" style="left:8px;top:396.5px;width:262px;overflow:hidden">0000024E3785F750</div>
<div class="m28" style="left:280px;top:396.5px"><span class="hb" style="color:#800080">50</span><span class="hb" style="color:#800080">72</span><span class="hb" style="color:#800080">6F</span><span class="hb" style="color:#800080">67</span><span class="hb" style="color:#800080">72</span><span class="hb" style="color:#800080">61</span><span class="hb" style="color:#800080">6D</span><span class="hb" style="color:#800080">57</span><span class="hb" style="color:#800080">36</span><span class="hb" style="color:#800080">34</span><span class="hb" style="color:#800080">33</span><span class="hb" style="color:#800080">32</span><span class="hb" style="color:#800080">3D</span><span class="hb" style="color:#800080">43</span><span class="hb" style="color:#800080">3A</span><span class="hb" style="color:#800080">5C</span></div>
<div class="m28" style="left:1048.5px;top:396.5px"><span class="ab" style="color:#800080">P</span><span class="ab" style="color:#800080">r</span><span class="ab" style="color:#800080">o</span><span class="ab" style="color:#800080">g</span><span class="ab" style="color:#800080">r</span><span class="ab" style="color:#800080">a</span><span class="ab" style="color:#800080">m</span><span class="ab" style="color:#800080">W</span><span class="ab" style="color:#800080">6</span><span class="ab" style="color:#800080">4</span><span class="ab" style="color:#800080">3</span><span class="ab" style="color:#800080">2</span><span class="ab" style="color:#800080">=</span><span class="ab" style="color:#800080">C</span><span class="ab" style="color:#800080">:</span><span class="ab" style="color:#800080">\</span></div>
<div class="m28" style="left:8px;top:426.5px;width:262px;overflow:hidden">0000024E3785F760</div>
<div class="m28" style="left:280px;top:426.5px"><span class="hb" style="color:#800080">50</span><span class="hb" style="color:#800080">72</span><span class="hb" style="color:#800080">6F</span><span class="hb" style="color:#800080">67</span><span class="hb" style="color:#800080">72</span><span class="hb" style="color:#800080">61</span><span class="hb" style="color:#800080">6D</span><span class="hb" style="color:#800080">20</span><span class="hb" style="color:#800080">46</span><span class="hb" style="color:#800080">69</span><span class="hb" style="color:#800080">6C</span><span class="hb" style="color:#800080">65</span><span class="hb" style="color:#800080">73</span><span class="hb" style="color:#008000">00</span><span class="hb" style="color:#008000">00</span><span class="hb" style="color:#008000">00</span></div>
<div class="m28" style="left:1048.5px;top:426.5px"><span class="ab" style="color:#800080">P</span><span class="ab" style="color:#800080">r</span><span class="ab" style="color:#800080">o</span><span class="ab" style="color:#800080">g</span><span class="ab" style="color:#800080">r</span><span class="ab" style="color:#800080">a</span><span class="ab" style="color:#800080">m</span><span class="ab" style="color:#800080"> </span><span class="ab" style="color:#800080">F</span><span class="ab" style="color:#800080">i</span><span class="ab" style="color:#800080">l</span><span class="ab" style="color:#800080">e</span><span class="ab" style="color:#800080">s</span><span class="ab" style="color:#008000">.</span><span class="ab" style="color:#008000">.</span><span class="ab" style="color:#008000">.</span></div>
</div>
<div style="left:1519px;top:936px;width:1px;height:410px;background:#fff"></div>
<div style="left:1528px;top:1248px;width:11px;height:26px;background:#8a8a8a"></div>
<div style="left:1550px;top:858px;width:1009.5px;height:489.5px;background:#f0f0f0;border:1px solid #7a8290"></div>
<div style="left:1551px;top:859px;width:981px;height:461px;background:#fff8f0;overflow:hidden">
<div style="left:1px;top:1px;width:108px;height:18px;background:#000"></div>
<div style="left:110px;top:1px;width:880px;height:18px;background:#c0c0c0"></div>
<div style="left:108.59999999999991px;top:0;width:2px;height:470px;background:#8e8e8e"></div>
<div style="left:352px;top:0;width:2px;height:470px;background:#8e8e8e"></div>
<div style="left:113px;top:347px;width:4px;height:200px;background:#000"></div>
<div style="left:113px;top:347px;width:10px;height:3px;background:#000"></div>
<div class="m16" style="left:9.5px;top:0.5px;width:99.0px;overflow:hidden;color:#fff;line-height:18px">0000007A6D0FF640</div>
<div class="m16" style="left:119.5px;top:0.5px;line-height:18px">0000000000000000</div>
<div class="m16" style="left:9.5px;top:18.5px;width:99.0px;overflow:hidden;color:#808080;line-height:18px">0000007A6D0FF648</div>
<div class="m16" style="left:119.5px;top:18.5px;line-height:18px">0000000000000020</div>
<div class="m16" style="left:9.5px;top:36.5px;width:99.0px;overflow:hidden;color:#808080;line-height:18px">0000007A6D0FF650</div>
<div class="m16" style="left:119.5px;top:36.5px;line-height:18px">0000007A6D0FF730</div>
<div class="m16" style="left:363px;top:36.5px;line-height:18px">&amp;&quot;ACE_11111111111111111111&quot;</div>
<div class="m16" style="left:9.5px;top:54.5px;width:99.0px;overflow:hidden;color:#808080;line-height:18px">0000007A6D0FF658</div>
<div class="m16" style="left:119.5px;top:54.5px;line-height:18px">00007FF688AA0000</div>
<div class="m16" style="left:363px;top:54.5px;line-height:18px">acefirstround.00007FF688AA0000</div>
<div class="m16" style="left:9.5px;top:72.5px;width:99.0px;overflow:hidden;color:#808080;line-height:18px">0000007A6D0FF660</div>
<div class="m16" style="left:119.5px;top:72.5px;line-height:18px">0000000000000001</div>
<div class="m16" style="left:9.5px;top:90.5px;width:99.0px;overflow:hidden;color:#808080;line-height:18px">0000007A6D0FF668</div>
<div class="m16" style="left:119.5px;top:90.5px;line-height:18px">0000024E3785F690</div>
<div class="m16" style="left:9.5px;top:108.5px;width:99.0px;overflow:hidden;color:#808080;line-height:18px">0000007A6D0FF670</div>
<div class="m16" style="left:119.5px;top:108.5px;line-height:18px">0000024E3785F6AC</div>
<div class="m16" style="left:9.5px;top:126.5px;width:99.0px;overflow:hidden;color:#808080;line-height:18px">0000007A6D0FF678</div>
<div class="m16" style="left:119.5px;top:126.5px;line-height:18px">0000024E3785F6AC</div>
<div class="m16" style="left:9.5px;top:144.5px;width:99.0px;overflow:hidden;color:#808080;line-height:18px">0000007A6D0FF680</div>
<div class="m16" style="left:119.5px;top:144.5px;line-height:18px">0000024E37858390</div>
<div class="m16" style="left:363px;top:144.5px;line-height:18px">&quot;11111111111111111111&quot;</div>
<div class="m16" style="left:9.5px;top:162.5px;width:99.0px;overflow:hidden;color:#808080;line-height:18px">0000007A6D0FF688</div>
<div class="m16" style="left:119.5px;top:162.5px;line-height:18px">0000024E378583A4</div>
<div class="m16" style="left:9.5px;top:180.5px;width:99.0px;overflow:hidden;color:#808080;line-height:18px">0000007A6D0FF690</div>
<div class="m16" style="left:119.5px;top:180.5px;line-height:18px">0000024E378583A4</div>
<div class="m16" style="left:9.5px;top:198.5px;width:99.0px;overflow:hidden;color:#808080;line-height:18px">0000007A6D0FF698</div>
<div class="m16" style="left:119.5px;top:198.5px;line-height:18px">00007FF688AA2934</div>
<div class="cj16" style="left:363px;top:198px;color:#ff0000">返回到</div>
<div class="m16" style="left:420.70000000000005px;top:198.5px;line-height:18px;color:#ff0000">acefirstround.00007FF688AA2934</div>
<div class="cj16" style="left:719.5px;top:198px;color:#ff0000">自</div>
<div class="m16" style="left:745px;top:198.5px;line-height:18px;color:#ff0000">acefirstround.00007FF688AA2900</div>
<div class="m16" style="left:9.5px;top:216.5px;width:99.0px;overflow:hidden;color:#808080;line-height:18px">0000007A6D0FF6A0</div>
<div class="m16" style="left:119.5px;top:216.5px;line-height:18px">000000000000000F</div>
<div class="m16" style="left:9.5px;top:234.5px;width:99.0px;overflow:hidden;color:#808080;line-height:18px">0000007A6D0FF6A8</div>
<div class="m16" style="left:119.5px;top:234.5px;line-height:18px">0000000000000018</div>
<div class="m16" style="left:9.5px;top:252.5px;width:99.0px;overflow:hidden;color:#808080;line-height:18px">0000007A6D0FF6B0</div>
<div class="m16" style="left:119.5px;top:252.5px;line-height:18px">0000000000000000</div>
<div class="m16" style="left:9.5px;top:270.5px;width:99.0px;overflow:hidden;color:#808080;line-height:18px">0000007A6D0FF6B8</div>
<div class="m16" style="left:119.5px;top:270.5px;line-height:18px">0000024E37857D10</div>
<div class="m16" style="left:9.5px;top:288.5px;width:99.0px;overflow:hidden;color:#808080;line-height:18px">0000007A6D0FF6C0</div>
<div class="m16" style="left:119.5px;top:288.5px;line-height:18px">000000000000001F</div>
<div class="m16" style="left:9.5px;top:306.5px;width:99.0px;overflow:hidden;color:#808080;line-height:18px">0000007A6D0FF6C8</div>
<div class="m16" style="left:119.5px;top:306.5px;line-height:18px">0000000000000001</div>
<div class="m16" style="left:9.5px;top:324.5px;width:99.0px;overflow:hidden;color:#808080;line-height:18px">0000007A6D0FF6D0</div>
<div class="m16" style="left:119.5px;top:324.5px;line-height:18px">0000007A6D0FF7E0</div>
<div class="m16" style="left:9.5px;top:342.5px;width:99.0px;overflow:hidden;color:#808080;line-height:18px">0000007A6D0FF6D8</div>
<div class="m16" style="left:125.5px;top:342.5px;line-height:18px">00007FF688AA3942</div>
<div class="cj16" style="left:363px;top:342px;color:#ff0000">返回到</div>
<div class="m16" style="left:420.70000000000005px;top:342.5px;line-height:18px;color:#ff0000">acefirstround.00007FF688AA3942</div>
<div class="cj16" style="left:719.5px;top:342px;color:#ff0000">自</div>
<div class="m16" style="left:745px;top:342.5px;line-height:18px;color:#ff0000">acefirstround.00007FF688AA2900</div>
<div class="m16" style="left:9.5px;top:360.5px;width:99.0px;overflow:hidden;color:#808080;line-height:18px">0000007A6D0FF6E0</div>
<div class="m16" style="left:125.5px;top:360.5px;line-height:18px">0000007A6D0FF7D0</div>
<div class="m16" style="left:9.5px;top:378.5px;width:99.0px;overflow:hidden;color:#808080;line-height:18px">0000007A6D0FF6E8</div>
<div class="m16" style="left:125.5px;top:378.5px;line-height:18px">0000024E3785FAE0</div>
<div class="m16" style="left:363px;top:378.5px;line-height:18px">&quot;ACE_11111111111111111111&quot;</div>
<div class="m16" style="left:9.5px;top:396.5px;width:99.0px;overflow:hidden;color:#808080;line-height:18px">0000007A6D0FF6F0</div>
<div class="m16" style="left:125.5px;top:396.5px;line-height:18px">0000024E3785FAE0</div>
<div class="m16" style="left:363px;top:396.5px;line-height:18px">&quot;ACE_11111111111111111111&quot;</div>
<div class="m16" style="left:9.5px;top:414.5px;width:99.0px;overflow:hidden;color:#808080;line-height:18px">0000007A6D0FF6F8</div>
<div class="m16" style="left:125.5px;top:414.5px;line-height:18px">0000000000000000</div>
<div class="m16" style="left:9.5px;top:432.5px;width:99.0px;overflow:hidden;color:#808080;line-height:18px">0000007A6D0FF700</div>
<div class="m16" style="left:125.5px;top:432.5px;line-height:18px">000079B200000004</div>
<div class="m16" style="left:9.5px;top:450.5px;width:99.0px;overflow:hidden;color:#808080;line-height:18px">0000007A6D0FF708</div>
<div class="m16" style="left:125.5px;top:450.5px;line-height:18px">0000000000000001</div>
</div>
<div style="left:2541px;top:1242px;width:11px;height:26px;background:#8a8a8a"></div>
<div style="left:1578px;top:1328px;width:257.5px;height:11px;background:#8a8a8a"></div>
</body></html>
